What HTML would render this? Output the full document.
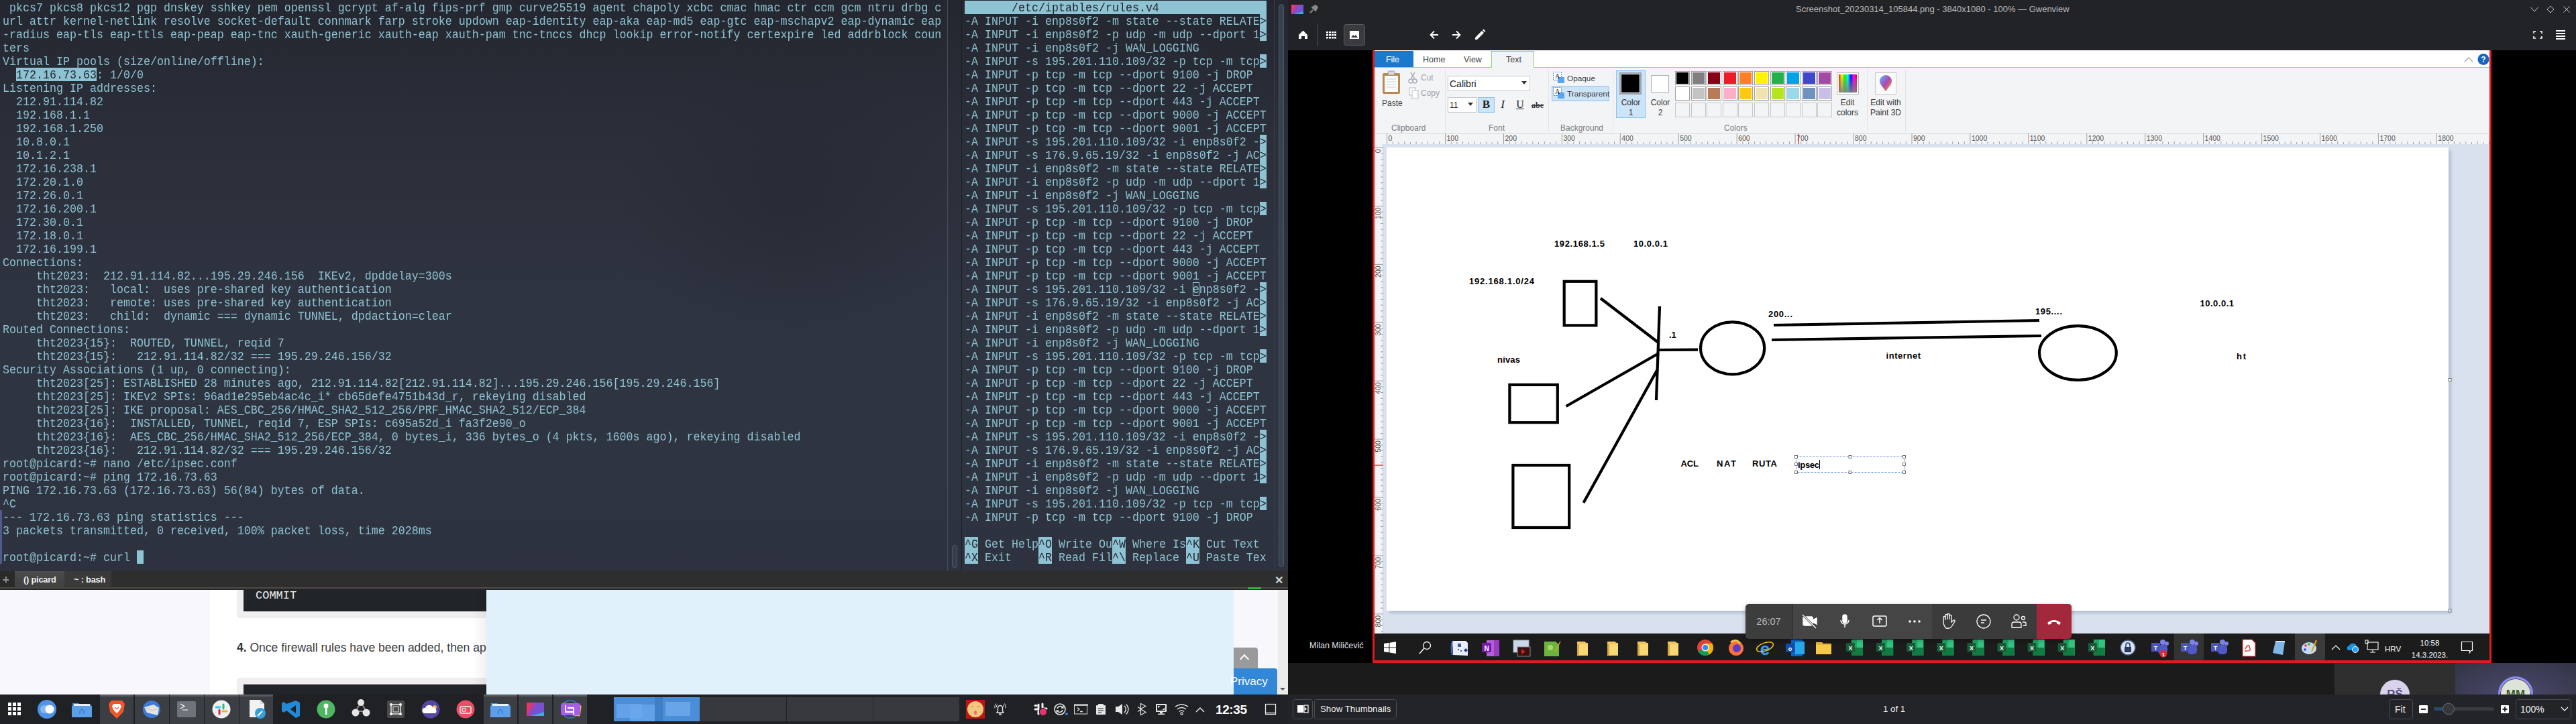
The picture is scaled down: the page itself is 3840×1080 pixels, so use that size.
<!DOCTYPE html>
<html><head><meta charset="utf-8"><title>screen</title>
<style>
*{margin:0;padding:0;box-sizing:border-box}
html,body{width:3840px;height:1080px;overflow:hidden;background:#000;position:relative}
body{font-family:"Liberation Sans",sans-serif}
.a{position:absolute}
#term{position:absolute;left:0;top:0;width:1920px;height:852px;overflow:hidden;background:radial-gradient(ellipse 260px 220px at 1180px 300px,rgba(30,33,42,.35),rgba(30,33,42,0)),linear-gradient(#24272f 0%,#2b2f3a 25%,#2f3441 55%,#2f3441 80%,#2d323e 100%)}
.tx{position:absolute;width:1px;height:1px;font-family:"Liberation Mono",monospace;font-size:16.67px;line-height:18.5185px;color:#8ec3d3;will-change:transform}
.tr{position:absolute;left:0;white-space:pre;transform:scaleY(1.08);transform-origin:0 0}
.tx i{font-style:normal;color:#1f232a}
.tx b.cur{font-weight:normal;outline:1px solid #8fbdcc;outline-offset:-1px}
.tabt{font-size:12.8px;line-height:18px;color:#f0f0f0;font-weight:bold;white-space:nowrap;letter-spacing:-0.2px}
.pt{font-size:12.5px;line-height:16px;white-space:nowrap}
.pr{font-size:12px;line-height:16px;white-space:nowrap}

</style></head><body>
<div id="term">
<div class="a" style="left:24px;top:101px;width:120px;height:20px;background:#8ec3d3"></div>
<div class="a" style="left:204px;top:821px;width:10px;height:20px;background:#8ec3d3"></div>
<div class="a" style="left:1438px;top:1px;width:450px;height:20px;background:#8ec3d3"></div>
<div class="a" style="left:1878px;top:21px;width:10px;height:20px;background:#8ec3d3"></div>
<div class="a" style="left:1878px;top:41px;width:10px;height:20px;background:#8ec3d3"></div>
<div class="a" style="left:1878px;top:81px;width:10px;height:20px;background:#8ec3d3"></div>
<div class="a" style="left:1878px;top:201px;width:10px;height:20px;background:#8ec3d3"></div>
<div class="a" style="left:1878px;top:221px;width:10px;height:20px;background:#8ec3d3"></div>
<div class="a" style="left:1878px;top:241px;width:10px;height:20px;background:#8ec3d3"></div>
<div class="a" style="left:1878px;top:261px;width:10px;height:20px;background:#8ec3d3"></div>
<div class="a" style="left:1878px;top:301px;width:10px;height:20px;background:#8ec3d3"></div>
<div class="a" style="left:1878px;top:421px;width:10px;height:20px;background:#8ec3d3"></div>
<div class="a" style="left:1878px;top:441px;width:10px;height:20px;background:#8ec3d3"></div>
<div class="a" style="left:1878px;top:461px;width:10px;height:20px;background:#8ec3d3"></div>
<div class="a" style="left:1878px;top:481px;width:10px;height:20px;background:#8ec3d3"></div>
<div class="a" style="left:1878px;top:521px;width:10px;height:20px;background:#8ec3d3"></div>
<div class="a" style="left:1878px;top:641px;width:10px;height:20px;background:#8ec3d3"></div>
<div class="a" style="left:1878px;top:661px;width:10px;height:20px;background:#8ec3d3"></div>
<div class="a" style="left:1878px;top:681px;width:10px;height:20px;background:#8ec3d3"></div>
<div class="a" style="left:1878px;top:701px;width:10px;height:20px;background:#8ec3d3"></div>
<div class="a" style="left:1878px;top:741px;width:10px;height:20px;background:#8ec3d3"></div>
<div class="a" style="left:1438px;top:801px;width:20px;height:20px;background:#8ec3d3"></div>
<div class="a" style="left:1438px;top:821px;width:20px;height:20px;background:#8ec3d3"></div>
<div class="a" style="left:1548px;top:801px;width:20px;height:20px;background:#8ec3d3"></div>
<div class="a" style="left:1548px;top:821px;width:20px;height:20px;background:#8ec3d3"></div>
<div class="a" style="left:1658px;top:801px;width:20px;height:20px;background:#8ec3d3"></div>
<div class="a" style="left:1658px;top:821px;width:20px;height:20px;background:#8ec3d3"></div>
<div class="a" style="left:1768px;top:801px;width:20px;height:20px;background:#8ec3d3"></div>
<div class="a" style="left:1768px;top:821px;width:20px;height:20px;background:#8ec3d3"></div>
<div class="a" style="left:1778px;top:421px;width:10px;height:20px;border:1px solid #8ec3d3"></div>
<div class="tx" style="left:4px;top:0"><div class="tr" style="top:3px"> pkcs7 pkcs8 pkcs12 pgp dnskey sshkey pem openssl gcrypt af-alg fips-prf gmp curve25519 agent chapoly xcbc cmac hmac ctr ccm gcm ntru drbg c</div><div class="tr" style="top:23px">url attr kernel-netlink resolve socket-default connmark farp stroke updown eap-identity eap-aka eap-md5 eap-gtc eap-mschapv2 eap-dynamic eap</div><div class="tr" style="top:43px">-radius eap-tls eap-ttls eap-peap eap-tnc xauth-generic xauth-eap xauth-pam tnc-tnccs dhcp lookip error-notify certexpire led addrblock coun</div><div class="tr" style="top:63px">ters</div><div class="tr" style="top:83px">Virtual IP pools (size/online/offline):</div><div class="tr" style="top:103px">  <i>172.16.73.63</i>: 1/0/0</div><div class="tr" style="top:123px">Listening IP addresses:</div><div class="tr" style="top:143px">  212.91.114.82</div><div class="tr" style="top:163px">  192.168.1.1</div><div class="tr" style="top:183px">  192.168.1.250</div><div class="tr" style="top:203px">  10.8.0.1</div><div class="tr" style="top:223px">  10.1.2.1</div><div class="tr" style="top:243px">  172.16.238.1</div><div class="tr" style="top:263px">  172.20.1.0</div><div class="tr" style="top:283px">  172.26.0.1</div><div class="tr" style="top:303px">  172.16.200.1</div><div class="tr" style="top:323px">  172.30.0.1</div><div class="tr" style="top:343px">  172.18.0.1</div><div class="tr" style="top:363px">  172.16.199.1</div><div class="tr" style="top:383px">Connections:</div><div class="tr" style="top:403px">     tht2023:  212.91.114.82...195.29.246.156  IKEv2, dpddelay=300s</div><div class="tr" style="top:423px">     tht2023:   local:  uses pre-shared key authentication</div><div class="tr" style="top:443px">     tht2023:   remote: uses pre-shared key authentication</div><div class="tr" style="top:463px">     tht2023:   child:  dynamic === dynamic TUNNEL, dpdaction=clear</div><div class="tr" style="top:483px">Routed Connections:</div><div class="tr" style="top:503px">     tht2023{15}:  ROUTED, TUNNEL, reqid 7</div><div class="tr" style="top:523px">     tht2023{15}:   212.91.114.82/32 === 195.29.246.156/32</div><div class="tr" style="top:543px">Security Associations (1 up, 0 connecting):</div><div class="tr" style="top:563px">     tht2023[25]: ESTABLISHED 28 minutes ago, 212.91.114.82[212.91.114.82]...195.29.246.156[195.29.246.156]</div><div class="tr" style="top:583px">     tht2023[25]: IKEv2 SPIs: 96ad1e295eb4ac4c_i* cb65defe4751b43d_r, rekeying disabled</div><div class="tr" style="top:603px">     tht2023[25]: IKE proposal: AES_CBC_256/HMAC_SHA2_512_256/PRF_HMAC_SHA2_512/ECP_384</div><div class="tr" style="top:623px">     tht2023{16}:  INSTALLED, TUNNEL, reqid 7, ESP SPIs: c695a52d_i fa3f2e90_o</div><div class="tr" style="top:643px">     tht2023{16}:  AES_CBC_256/HMAC_SHA2_512_256/ECP_384, 0 bytes_i, 336 bytes_o (4 pkts, 1600s ago), rekeying disabled</div><div class="tr" style="top:663px">     tht2023{16}:   212.91.114.82/32 === 195.29.246.156/32</div><div class="tr" style="top:683px">root@picard:~# nano /etc/ipsec.conf</div><div class="tr" style="top:703px">root@picard:~# ping 172.16.73.63</div><div class="tr" style="top:723px">PING 172.16.73.63 (172.16.73.63) 56(84) bytes of data.</div><div class="tr" style="top:743px">^C</div><div class="tr" style="top:763px">--- 172.16.73.63 ping statistics ---</div><div class="tr" style="top:783px">3 packets transmitted, 0 received, 100% packet loss, time 2028ms</div><div class="tr" style="top:803px"></div><div class="tr" style="top:823px">root@picard:~# curl  </div></div>
<div class="tx" style="left:1438px;top:0"><div class="tr" style="top:3px"><i>       /etc/iptables/rules.v4                </i></div><div class="tr" style="top:23px">-A INPUT -i enp8s0f2 -m state --state RELATE<i>&gt;</i></div><div class="tr" style="top:43px">-A INPUT -i enp8s0f2 -p udp -m udp --dport 1<i>&gt;</i></div><div class="tr" style="top:63px">-A INPUT -i enp8s0f2 -j WAN_LOGGING</div><div class="tr" style="top:83px">-A INPUT -s 195.201.110.109/32 -p tcp -m tcp<i>&gt;</i></div><div class="tr" style="top:103px">-A INPUT -p tcp -m tcp --dport 9100 -j DROP</div><div class="tr" style="top:123px">-A INPUT -p tcp -m tcp --dport 22 -j ACCEPT</div><div class="tr" style="top:143px">-A INPUT -p tcp -m tcp --dport 443 -j ACCEPT</div><div class="tr" style="top:163px">-A INPUT -p tcp -m tcp --dport 9000 -j ACCEPT</div><div class="tr" style="top:183px">-A INPUT -p tcp -m tcp --dport 9001 -j ACCEPT</div><div class="tr" style="top:203px">-A INPUT -s 195.201.110.109/32 -i enp8s0f2 -<i>&gt;</i></div><div class="tr" style="top:223px">-A INPUT -s 176.9.65.19/32 -i enp8s0f2 -j AC<i>&gt;</i></div><div class="tr" style="top:243px">-A INPUT -i enp8s0f2 -m state --state RELATE<i>&gt;</i></div><div class="tr" style="top:263px">-A INPUT -i enp8s0f2 -p udp -m udp --dport 1<i>&gt;</i></div><div class="tr" style="top:283px">-A INPUT -i enp8s0f2 -j WAN_LOGGING</div><div class="tr" style="top:303px">-A INPUT -s 195.201.110.109/32 -p tcp -m tcp<i>&gt;</i></div><div class="tr" style="top:323px">-A INPUT -p tcp -m tcp --dport 9100 -j DROP</div><div class="tr" style="top:343px">-A INPUT -p tcp -m tcp --dport 22 -j ACCEPT</div><div class="tr" style="top:363px">-A INPUT -p tcp -m tcp --dport 443 -j ACCEPT</div><div class="tr" style="top:383px">-A INPUT -p tcp -m tcp --dport 9000 -j ACCEPT</div><div class="tr" style="top:403px">-A INPUT -p tcp -m tcp --dport 9001 -j ACCEPT</div><div class="tr" style="top:423px">-A INPUT -s 195.201.110.109/32 -i enp8s0f2 -<i>&gt;</i></div><div class="tr" style="top:443px">-A INPUT -s 176.9.65.19/32 -i enp8s0f2 -j AC<i>&gt;</i></div><div class="tr" style="top:463px">-A INPUT -i enp8s0f2 -m state --state RELATE<i>&gt;</i></div><div class="tr" style="top:483px">-A INPUT -i enp8s0f2 -p udp -m udp --dport 1<i>&gt;</i></div><div class="tr" style="top:503px">-A INPUT -i enp8s0f2 -j WAN_LOGGING</div><div class="tr" style="top:523px">-A INPUT -s 195.201.110.109/32 -p tcp -m tcp<i>&gt;</i></div><div class="tr" style="top:543px">-A INPUT -p tcp -m tcp --dport 9100 -j DROP</div><div class="tr" style="top:563px">-A INPUT -p tcp -m tcp --dport 22 -j ACCEPT</div><div class="tr" style="top:583px">-A INPUT -p tcp -m tcp --dport 443 -j ACCEPT</div><div class="tr" style="top:603px">-A INPUT -p tcp -m tcp --dport 9000 -j ACCEPT</div><div class="tr" style="top:623px">-A INPUT -p tcp -m tcp --dport 9001 -j ACCEPT</div><div class="tr" style="top:643px">-A INPUT -s 195.201.110.109/32 -i enp8s0f2 -<i>&gt;</i></div><div class="tr" style="top:663px">-A INPUT -s 176.9.65.19/32 -i enp8s0f2 -j AC<i>&gt;</i></div><div class="tr" style="top:683px">-A INPUT -i enp8s0f2 -m state --state RELATE<i>&gt;</i></div><div class="tr" style="top:703px">-A INPUT -i enp8s0f2 -p udp -m udp --dport 1<i>&gt;</i></div><div class="tr" style="top:723px">-A INPUT -i enp8s0f2 -j WAN_LOGGING</div><div class="tr" style="top:743px">-A INPUT -s 195.201.110.109/32 -p tcp -m tcp<i>&gt;</i></div><div class="tr" style="top:763px">-A INPUT -p tcp -m tcp --dport 9100 -j DROP</div><div class="tr" style="top:783px"></div><div class="tr" style="top:803px"><i>^G</i> Get Help<i>^O</i> Write Ou<i>^W</i> Where Is<i>^K</i> Cut Text</div><div class="tr" style="top:823px"><i>^X</i> Exit    <i>^R</i> Read Fil<i>^\</i> Replace <i>^U</i> Paste Tex</div></div>
<div class="a" style="left:1412px;top:0;width:1px;height:852px;background:#474c56"></div>
<div class="a" style="left:1433px;top:0;width:1px;height:852px;background:#1b1e24"></div>
<div class="a" style="left:1419px;top:813px;width:8px;height:34px;border:1px solid #4d5866;background:#343d49;border-radius:4px"></div>
<div class="a" style="left:1899px;top:0;width:1px;height:852px;background:#3b3f4a"></div>
<div class="a" style="left:1906px;top:6px;width:8px;height:840px;border:1px solid #4d5866;background:#37424f;border-radius:4px"></div>
<div class="a" style="left:0;top:761px;width:3px;height:80px;background:#505b8c"></div>

</div>
<!-- tab bar -->
<div class="a" style="left:0;top:852px;width:1920px;height:24px;background:#2e2e2e"></div>
<div class="a" style="left:0;top:852px;width:22px;height:24px;background:#2a2a2a"></div>
<div class="a" style="left:4px;top:860px;width:10px;height:10px;">
 <div class="a" style="left:4px;top:0px;width:2px;height:9px;background:#8c8c8c"></div>
 <div class="a" style="left:0px;top:3.5px;width:9px;height:2px;background:#8c8c8c"></div>
</div>
<div class="a" style="left:22px;top:852px;width:74px;height:24px;background:linear-gradient(#4c4c4c,#404040)"></div>
<div class="a" style="left:96px;top:852px;width:70px;height:23px;background:#3a3a3a"></div>
<div class="a tabt" style="left:35px;top:856px;">() picard</div>
<div class="a tabt" style="left:110px;top:856px">~ : bash</div>
<div class="a" style="left:1899px;top:859px;width:14px;height:14px;color:#cfcfcf;font-size:16px;line-height:14px;text-align:center;font-weight:bold">&#x2715;</div>
<div class="a" style="left:0;top:876px;width:1920px;height:4px;background:#4a4a4a;border-bottom:2px solid #262626"></div>
<div class="a" style="left:1860px;top:876px;width:20px;height:3px;background:#27b43e"></div>
<!-- browser -->
<div class="a" style="left:0;top:880px;width:1920px;height:156px;background:#fff;overflow:hidden">
 <div class="a" style="left:0;top:0;width:313px;height:156px;background:#f8f8fc"></div>
 <div class="a" style="left:353px;top:-20px;width:500px;height:62px;background:#f0eeee;border-radius:5px"></div>
 <div class="a" style="left:363px;top:-20px;width:490px;height:52px;background:#212428"></div>
 <div class="a" style="left:381px;top:0px;font-family:'Liberation Mono',monospace;font-size:17px;line-height:18px;color:#f2f2f2">COMMIT</div>
 <div class="a" style="left:353px;top:75px;font-size:17.5px;line-height:22px;color:#3c3c3c;white-space:nowrap"><b style="color:#333">4.</b> Once firewall rules have been added, then ap</div>
 <div class="a" style="left:353px;top:131px;width:500px;height:62px;background:#f0eeee;border-radius:5px"></div>
 <div class="a" style="left:363px;top:141px;width:490px;height:52px;background:#212428"></div>
 <div class="a" style="left:705px;top:0;width:20px;height:156px;background:linear-gradient(90deg,rgba(0,0,0,0),rgba(0,0,0,.06))"></div>
 <div class="a" style="left:725px;top:0;width:1114px;height:156px;background:#e1f1fb"></div>
 <div class="a" style="left:1839px;top:0;width:66px;height:156px;background:#f8f8fc"></div>
 <div class="a" style="left:1905px;top:0;width:15px;height:156px;background:#ececec"></div>
 <div class="a" style="left:1908px;top:146px;width:0;height:0;border-left:4px solid transparent;border-right:4px solid transparent;border-top:4px solid #555"></div>
 <div class="a" style="left:1839px;top:86px;width:36px;height:32px;background:#9a9a9a;border-radius:0 4px 0 0"></div>
 <div class="a" style="left:1850px;top:98px;width:10px;height:10px;border-left:2px solid #fff;border-top:2px solid #fff;transform:rotate(45deg)"></div>
 <div class="a" style="left:1839px;top:117px;width:65px;height:39px;background:#3288d6;border-radius:0 4px 0 0"></div>
 <div class="a" style="left:1834px;top:125px;font-size:17px;line-height:24px;color:#fff;white-space:nowrap">Privacy</div>
</div>
<!-- taskbar -->
<svg class="a" style="left:0;top:1036px" width="1920" height="44" viewBox="0 1036 1920 44">
<rect x="0" y="1036" width="1920" height="44" fill="#1f2125"/>
<!-- app grid -->
<g fill="#fff">
<rect x="12" y="1048" width="5" height="5"/><rect x="19" y="1048" width="5" height="5"/><rect x="26" y="1048" width="5" height="5"/>
<rect x="12" y="1055" width="5" height="5"/><rect x="19" y="1055" width="5" height="5"/><rect x="26" y="1055" width="5" height="5"/>
<rect x="12" y="1062" width="5" height="5"/><rect x="19" y="1062" width="5" height="5"/><rect x="26" y="1062" width="5" height="5"/>
</g>
<!-- toggle -->
<circle cx="70" cy="1058" r="14" fill="#4f95e6"/>
<rect x="60" y="1052" width="21" height="12" rx="6" fill="#8ab8f0"/>
<circle cx="74" cy="1058" r="6.5" fill="#fff"/>
<!-- folder -->
<g transform="translate(107,1046)"><path d="M1 3 h9 l3 2 h16 v19 h-28z" fill="#4a8fe0"/><rect x="3" y="4" width="24" height="3" fill="#e8f0fb"/><path d="M0 7 h30 v17 h-30z" fill="#5b9fe8"/><path d="M12 19 v-4 l3 -3 l3 3 v4" fill="none" stroke="#3a78c4" stroke-width="1.3"/></g>
<!-- slots -->
<g fill="#3b3e42"><rect x="149" y="1036" width="50" height="44"/><rect x="201" y="1036" width="51" height="44"/><rect x="253" y="1036" width="51" height="44"/><rect x="305" y="1036" width="51" height="44"/><rect x="357" y="1036" width="50" height="44"/>
<rect x="721" y="1036" width="50" height="44"/><rect x="773" y="1036" width="50" height="44"/><rect x="825" y="1036" width="50" height="44"/></g>
<g fill="#585c61"><rect x="149" y="1036" width="50" height="3"/><rect x="201" y="1036" width="51" height="3"/><rect x="253" y="1036" width="51" height="3"/><rect x="305" y="1036" width="51" height="3"/><rect x="357" y="1036" width="50" height="3"/>
<rect x="721" y="1036" width="50" height="3"/><rect x="773" y="1036" width="50" height="3"/><rect x="825" y="1036" width="50" height="3"/></g>
<!-- brave -->
<path d="M166 1045 h16 l4 5 l-2 12 l-10 10 l-10 -10 l-2 -12z" fill="#f1562b"/>
<path d="M169 1050 h10 l2 4 l-3 6 l-4 4 l-4 -4 l-3 -6z" fill="#fff"/>
<path d="M171 1055 l3 3 l3 -3" fill="none" stroke="#f1562b" stroke-width="1.2"/>
<!-- thunderbird -->
<circle cx="226" cy="1058" r="13" fill="#3d7ad8"/>
<path d="M215 1055 l14 -4 l8 5 l-2 11 l-16 -4z" fill="#e4e4e4"/>
<path d="M217 1056 l10 4 l9 -3" fill="none" stroke="#bdbdbd" stroke-width="1"/>
<!-- terminal -->
<rect x="264" y="1046" width="28" height="24" rx="2" fill="#6f737a"/>
<path d="M269 1050 l6 3.5 l-6 3.5 M272 1059 h8" fill="none" stroke="#fff" stroke-width="1.2"/>
<!-- slack -->
<circle cx="330" cy="1058" r="13.5" fill="#f0f0f0"/>
<g stroke-linecap="round" stroke-width="3">
<path d="M322 1055 h6" stroke="#36c5f0"/><path d="M333 1051 v6" stroke="#2eb67d"/><path d="M332 1061 h6" stroke="#ecb22e"/><path d="M327 1059 v6" stroke="#e01e5a"/>
</g>
<!-- doc -->
<path d="M372 1044 h16 l6 6 v20 h-22z" fill="#f2f2f2"/><path d="M388 1044 v6 h6" fill="#d9d9d9"/>
<circle cx="388" cy="1064" r="8" fill="#35a0dc"/><path d="M384 1068 l7 -7" stroke="#fff" stroke-width="2"/>
<!-- vscode -->
<path d="M441 1045 l6 3 v20 l-6 3 l-14 -11 l-4 3 l-3 -2 v-12 l3 -2 l4 3z M441 1052 l-8 6 l8 6z" fill="#2489d8" fill-rule="evenodd"/>
<!-- key -->
<circle cx="486" cy="1058" r="13.5" fill="#4fb662"/>
<circle cx="486" cy="1053" r="3.5" fill="#fff"/><rect x="485" y="1055" width="2.5" height="11" fill="#fff"/>
<!-- network -->
<path d="M538 1048 l-8 13 h16z" fill="none" stroke="#8a8a8a" stroke-width="2"/>
<circle cx="538" cy="1048" r="5" fill="#e6e6e6"/><circle cx="530" cy="1063" r="5.5" fill="#e6e6e6"/><circle cx="546" cy="1063" r="5.5" fill="#e6e6e6"/>
<!-- frame -->
<rect x="577" y="1045" width="26" height="26" rx="3" fill="#4a4a4a"/>
<rect x="583" y="1051" width="14" height="14" fill="none" stroke="#e6e6e6" stroke-width="1.5"/>
<rect x="586" y="1054" width="8" height="8" fill="none" stroke="#e6e6e6" stroke-width="1"/>
<g fill="#fff"><circle cx="583" cy="1051" r="2"/><circle cx="597" cy="1051" r="2"/><circle cx="583" cy="1065" r="2"/><circle cx="597" cy="1065" r="2"/></g>
<!-- cloud -->
<circle cx="642" cy="1058" r="13.5" fill="#5547a8"/>
<circle cx="648" cy="1055" r="3" fill="#f5b942"/>
<path d="M633 1064 a4 4 0 0 1 1 -8 a6 6 0 0 1 11 -1 a4 4 0 0 1 5 4 a4 4 0 0 1 -1 5z" fill="#fff"/>
<!-- radio -->
<circle cx="694" cy="1058" r="13.5" fill="#ec4d63"/>
<rect x="686" y="1054" width="16" height="10" rx="1.5" fill="none" stroke="#fff" stroke-width="1.3"/>
<rect x="689" y="1057" width="5" height="4" fill="none" stroke="#fff" stroke-width="1"/>
<!-- folder 2 -->
<g transform="translate(731,1046)"><path d="M1 3 h9 l3 2 h16 v19 h-28z" fill="#4a8fe0"/><rect x="3" y="4" width="24" height="3" fill="#e8f0fb"/><path d="M0 7 h30 v17 h-30z" fill="#5b9fe8"/><path d="M12 19 v-4 l3 -3 l3 3 v4" fill="none" stroke="#3a78c4" stroke-width="1.3"/></g>
<!-- krita -->
<path d="M785 1048 h26 v20 h-26z" fill="#7a4fd0"/><path d="M785 1048 h8 l-5 20 h-3z" fill="#e8365d"/><path d="M793 1048 h8 l-14 20 h-2z" fill="#b33ea0" opacity=".9"/><path d="M811 1062 v6 h-20z" fill="#2fb3d6"/>
<!-- screenshot -->
<circle cx="850" cy="1058" r="13" fill="none" stroke="#2b7de0" stroke-width="1.5"/>
<rect x="838" y="1050" width="28" height="17" rx="2" fill="#f5b040" transform="rotate(8 852 1058)"/>
<rect x="836" y="1049" width="29" height="18" rx="3" fill="#a55ee8"/>
<path d="M843 1052 v10 h12 M846 1056 h9 v10" fill="none" stroke="#fff" stroke-width="1.8"/>
<!-- pager -->
<rect x="915" y="1040" width="128" height="36" fill="#4b8ed8"/>
<rect x="919" y="1050" width="38" height="21" fill="#6aa6ea" opacity=".8"/><rect x="939" y="1051" width="37" height="25" fill="#6aaaf0" opacity=".7"/>
<rect x="976" y="1040" width="12" height="36" fill="#3f7fc8"/>
<rect x="992" y="1047" width="37" height="21" fill="#68a4e8"/>
<rect x="1043" y="1040" width="129" height="36" fill="#38393c"/><rect x="1173" y="1040" width="128" height="36" fill="#38393c"/><rect x="1302" y="1040" width="128" height="36" fill="#38393c"/>
<!-- tray -->
<rect x="1420" y="1040" width="10" height="36" fill="#38393c"/>
<rect x="1440" y="1044" width="28" height="28" fill="#c01313"/>
<circle cx="1454" cy="1058" r="12" fill="#f5c77e"/>
<path d="M1448 1054 h3 M1457 1054 h3" stroke="#b07a40" stroke-width="1"/><ellipse cx="1454" cy="1063" rx="2" ry="3" fill="#e76b7d"/>
<g fill="none" stroke="#e6e6e6" stroke-width="1.4">
<path d="M1486 1063 h10 l-1.5 -2.5 v-4.5 a3.5 3.5 0 0 0 -7 0 v4.5z" /><path d="M1489.5 1064.5 a1.5 1.5 0 0 0 3 0" fill="#e6e6e6"/>
<path d="M1484.5 1049.5 a9 9 0 0 0 -1.5 7 M1486.5 1051 a6 6 0 0 0 -1 4 M1497.5 1049.5 a9 9 0 0 1 1.5 7 M1495.5 1051 a6 6 0 0 1 1 4" stroke-width="1"/>
<circle cx="1580" cy="1058" r="8" stroke-width="1.6"/><path d="M1576 1057 a4.5 4.5 0 0 1 8 -1.5 M1584 1059 a4.5 4.5 0 0 1 -8 1.5" stroke-width="1.5"/><path d="M1585 1053 v3 h-3 M1575 1063 v-3 h3" stroke-width="1.3"/>
<rect x="1601.5" y="1052" width="19" height="13" stroke-width="1"/><path d="M1601 1051.5 h21" stroke-width="2"/><path d="M1606 1055.5 l3 2.5 l-3 2.5 M1610 1061.5 h4" stroke-width="1.3"/>
<path d="M1708 1053.5 l-7.5 -4 v17 l7.5 -4 l-8 -5z M1700.5 1057.5 l-4.5 -3 M1700.5 1058.5 l-4.5 3" stroke-width="1.2"/>
<path d="M1752 1054.5 a15 15 0 0 1 19 0 M1755 1058 a10 10 0 0 1 13 0 M1758 1061.5 a5 5 0 0 1 7 0" stroke-width="1.5"/><circle cx="1761.5" cy="1064.5" r="1.6" stroke-width="1.2"/>
<path d="M1783 1062 l6 -6 l6 6" stroke-width="1.5"/>
<rect x="1886.5" y="1050.5" width="15" height="15" stroke-width="1.3"/><path d="M1886.5 1063.5 h15" stroke-width="1.3"/>
</g>
<g fill="#e6e6e6">
<rect x="1634" y="1052" width="14" height="14" rx="1"/><rect x="1637" y="1050" width="8" height="3" rx="1"/>
<path d="M1637 1057 h8 M1637 1060 h8 M1637 1063 h5" stroke="#1f2125" stroke-width="1.2"/>
<path d="M1663 1054 h4 l6 -4 v16 l-6 -4 h-4z"/>
<path d="M1676 1053 a6.5 6.5 0 0 1 0 10 M1678.5 1050.5 a10 10 0 0 1 0 15" fill="none" stroke="#e6e6e6" stroke-width="1.4"/>
<rect x="1723" y="1050" width="16" height="12" rx="1"/><rect x="1725" y="1052" width="12" height="8" fill="#1f2125"/><path d="M1726 1053 l3.5 0 l-3.5 3.5z M1736 1059 l-3.5 0 l3.5 -3.5z"/><rect x="1729" y="1062" width="4" height="2.5"/><rect x="1726" y="1064.5" width="10" height="1.5"/>
</g>
<g stroke="#f2f2f2" stroke-width="3" stroke-linecap="round">
<path d="M1548 1051 v5 M1554 1050 v5 M1543 1058 h5 M1556 1057 h4 M1543 1052.5 h2 M1548 1061 v4"/>
</g>
<circle cx="1555" cy="1062" r="5.5" fill="#e8336e" stroke="#1f2125" stroke-width="1"/>
<circle cx="1590" cy="1065" r="2" fill="#3b7ddd"/>
<text x="1812" y="1064.5" font-family="Liberation Sans" font-weight="bold" font-size="19" fill="#fff" textLength="47">12:35</text>
</svg>


<!-- gwenview title + toolbar -->
<div class="a" style="left:1920px;top:0;width:1920px;height:75px;background:#212327"></div>
<svg class="a" style="left:1920px;top:0" width="1920" height="75" viewBox="1920 0 1920 75">
<rect x="1925" y="7" width="18" height="14" fill="#7a52d6"/><path d="M1925 7 h6 l-4 14 h-2z" fill="#f0386b"/><path d="M1931 7 h6 l-10 14 h-2z" fill="#b03ea8"/><path d="M1943 17 v4 h-14z" fill="#2fb0da"/>
<path d="M1953 19 l4 -4 M1956 11 l5 -3 l3 3 l-3 5z" stroke="#8a8a8a" stroke-width="2" fill="#8a8a8a"/>
<path d="M1936 52 l6.5 -6.5 l6.5 6.5 v6 h-4 v-4 h-5 v4 h-4z" fill="#fff"/><rect x="1941" y="54" width="3" height="4" fill="#212327"/>
<rect x="1964" y="35" width="1" height="34" fill="#505256"/>
<g fill="#fff"><rect x="1977" y="47" width="3" height="2.5"/><rect x="1981" y="47" width="3" height="2.5"/><rect x="1985" y="47" width="3" height="2.5"/><rect x="1989" y="47" width="3" height="2.5"/>
<rect x="1977" y="51" width="3" height="2.5"/><rect x="1981" y="51" width="3" height="2.5"/><rect x="1985" y="51" width="3" height="2.5"/><rect x="1989" y="51" width="3" height="2.5"/>
<rect x="1977" y="55" width="3" height="2.5"/><rect x="1981" y="55" width="3" height="2.5"/><rect x="1985" y="55" width="3" height="2.5"/><rect x="1989" y="55" width="3" height="2.5"/></g>
<rect x="2003.5" y="36.5" width="31" height="31" rx="3" fill="#3a3b3e" stroke="#5b5c60"/>
<rect x="2012" y="46" width="14" height="12" fill="#fff"/><path d="M2014 56 l3 -4 l2 2 l2 -2 l3 4z" fill="#3a3b3e"/>
<path d="M2144 52 h-11 M2138 46.5 l-5.5 5.5 l5.5 5.5" stroke="#fff" stroke-width="1.8" fill="none"/>
<path d="M2165 52 h11 M2171 46.5 l5.5 5.5 l-5.5 5.5" stroke="#fff" stroke-width="1.8" fill="none"/>
<path d="M2199 59 v-3 l10 -10 l3 3 l-10 10z M2210 45 l1.5 -1.5 l3 3 l-1.5 1.5z" fill="#fff"/>
<path d="M3772.5 11 l5.5 6 l5.5 -6" stroke="#c8c8c8" stroke-width="1" fill="none"/>
<path d="M3802 9 l5 5 l-5 5 l-5 -5z" stroke="#c8c8c8" stroke-width="1" fill="none"/>
<path d="M3821.5 9.5 l9 9 M3830.5 9.5 l-9 9" stroke="#c8c8c8" stroke-width="1" fill="none"/>
<path d="M3777 50 v-3 h3 M3786 47 h3 v3 M3789 54 v3 h-3 M3780 57 h-3 v-3" stroke="#fff" stroke-width="1.6" fill="none"/>
<g fill="#fff"><rect x="3810" y="45" width="14" height="2"/><rect x="3810" y="49" width="14" height="2"/><rect x="3810" y="53" width="14" height="2"/><rect x="3810" y="57" width="14" height="2"/></g>
</svg>
<div class="a" style="left:2677px;top:5px;font-size:13px;line-height:18px;color:#bdbdbd;white-space:nowrap">Screenshot_20230314_105844.png - 3840x1080 - 100% — Gwenview</div>
<!-- image view -->
<div class="a" style="left:1920px;top:75px;width:1920px;height:961px;background:#1b1b1c;overflow:hidden">
 <div class="a" style="left:0;top:0;width:1920px;height:914px;background:#000"></div>
  <div class="a" style="left:32px;top:880px;font-size:12.5px;line-height:16px;color:#e6e6e6;white-space:nowrap">Milan Miličević</div>
 <div class="a" style="left:1560px;top:914px;width:180px;height:47px;background:#2f2f30"></div>
 <div class="a" style="left:1740px;top:914px;width:180px;height:47px;background:radial-gradient(ellipse 120px 60px at 90px 47px,#4a4a6e,#353548)"></div>
 <div class="a" style="left:1628px;top:939px;width:44px;height:44px;border-radius:50%;background:#d8d3ea;color:#5a5080;font-size:17px;text-align:center;line-height:44px;font-weight:bold">RŠ</div>
 <div class="a" style="left:1804px;top:934px;width:52px;height:52px;border-radius:50%;background:#dde3d6;border:3px solid #8c8cf5;box-shadow:inset 0 0 0 1px #3a3a50;color:#3e5a30;font-size:17px;text-align:center;line-height:48px;font-weight:bold">MM</div>
</div>
<div class="a" style="left:2046px;top:75px;width:1668px;height:914px;background:#e21b1b"></div>
<div class="a" style="left:2049px;top:75px;width:1662px;height:26px;background:#fff"></div>
<div class="a" style="left:2049px;top:76px;width:58px;height:25px;background:#1979ca"></div>
<div class="a pt" style="left:2047px;top:81px;width:58px;text-align:center;color:#fff">File</div>
<div class="a pt" style="left:2121px;top:81px;color:#444">Home</div>
<div class="a pt" style="left:2182px;top:81px;color:#444">View</div>
<div class="a" style="left:2223px;top:76px;width:64px;height:26px;background:#f3f4f6;border:1px solid #8fd46a;border-bottom:none"></div>
<div class="a pt" style="left:2245px;top:81px;color:#444">Text</div>
<div class="a" style="left:2049px;top:101px;width:1662px;height:98px;background:#f3f4f6"></div>
<div class="a" style="left:2049px;top:100px;width:174px;height:1px;background:#8fd46a"></div>
<div class="a" style="left:2287px;top:100px;width:1424px;height:1px;background:#8fd46a"></div>
<svg class="a" style="left:3670px;top:78px" width="41" height="22"><path d="M4 14 l6 -6 l6 6" stroke="#9aa0a8" stroke-width="1.2" fill="none"/><circle cx="32" cy="10.5" r="8.5" fill="#1565c0"/><text x="32" y="15" font-family="Liberation Sans" font-weight="bold" font-size="12" fill="#fff" text-anchor="middle">?</text></svg>
<div class="a" style="left:2154px;top:104px;width:1px;height:92px;background:#e2e3e5"></div>
<div class="a" style="left:2308px;top:104px;width:1px;height:92px;background:#e2e3e5"></div>
<div class="a" style="left:2404px;top:104px;width:1px;height:92px;background:#e2e3e5"></div>
<div class="a" style="left:2783px;top:104px;width:1px;height:92px;background:#e2e3e5"></div>
<div class="a" style="left:2840px;top:104px;width:1px;height:92px;background:#e2e3e5"></div>
<svg class="a" style="left:2058px;top:104px" width="95" height="60"><rect x="3" y="5" width="26" height="31" rx="2" fill="#b98a52"/><rect x="6" y="9" width="20" height="24" fill="#fdfdfd"/><path d="M9 14 h14 M9 18 h14 M9 22 h14 M9 26 h14" stroke="#c9ccd2" stroke-width="1"/><rect x="11" y="2" width="10" height="6" rx="1.5" fill="#d9d9d9" stroke="#888" stroke-width="0.8"/><circle cx="45" cy="17" r="3" fill="none" stroke="#a9b0bb" stroke-width="1.5"/><circle cx="51" cy="17" r="3" fill="none" stroke="#a9b0bb" stroke-width="1.5"/><path d="M45 14 l6 -10 M51 14 l-6 -10" stroke="#a9b0bb" stroke-width="1.5"/><rect x="43" y="27" width="9" height="11" fill="#fff" stroke="#b8bec8" stroke-width="1"/><rect x="47" y="31" width="9" height="12" fill="#fff" stroke="#b8bec8" stroke-width="1"/></svg>
<div class="a pr" style="left:2060px;top:146px;color:#444">Paste</div>
<div class="a pr" style="left:2118px;top:108px;color:#a0a4aa">Cut</div>
<div class="a pr" style="left:2118px;top:131px;color:#a0a4aa">Copy</div>
<div class="a pr" style="left:2074px;top:183px;color:#7a7d82">Clipboard</div>
<div class="a" style="left:2158px;top:113px;width:123px;height:23px;background:#fff;border:1px solid #c5c8ce"></div>
<div class="a pr" style="left:2161px;top:117px;color:#222;font-size:14px">Calibri</div>
<svg class="a" style="left:2268px;top:121px" width="10" height="6"><path d="M0 0 h8 l-4 5z" fill="#333"/></svg>
<div class="a" style="left:2158px;top:145px;width:43px;height:23px;background:#fff;border:1px solid #c5c8ce"></div>
<div class="a pr" style="left:2161px;top:149px;color:#222">11</div>
<svg class="a" style="left:2188px;top:153px" width="10" height="6"><path d="M0 0 h8 l-4 5z" fill="#333"/></svg>
<div class="a" style="left:2203px;top:145px;width:25px;height:23px;background:#cce4f7;border:1px solid #8fc0ee"></div>
<div class="a" style="left:2203px;top:146px;width:25px;text-align:center;font-family:'Liberation Serif',serif;font-weight:bold;font-size:17px;line-height:20px;color:#222">B</div>
<div class="a" style="left:2232px;top:146px;width:16px;text-align:center;font-family:'Liberation Serif',serif;font-style:italic;font-size:17px;line-height:20px;color:#222">I</div>
<div class="a" style="left:2258px;top:146px;width:16px;text-align:center;font-family:'Liberation Serif',serif;text-decoration:underline;font-size:16px;line-height:20px;color:#222">U</div>
<div class="a" style="left:2282px;top:148px;width:20px;text-align:center;font-family:'Liberation Serif',serif;font-weight:bold;text-decoration:line-through;font-size:12px;line-height:18px;color:#333">abc</div>
<div class="a pr" style="left:2219px;top:183px;color:#7a7d82">Font</div>
<div class="a" style="left:2313px;top:128px;width:86px;height:23px;background:#cce4f7;border:1px solid #8fc0ee"></div>
<svg class="a" style="left:2315px;top:107px" width="18" height="18"><rect x="0.5" y="0.5" width="12" height="12" fill="#fff" stroke="#3a78c4" stroke-dasharray="1.5 1.5"/><rect x="7" y="8" width="10" height="9" fill="#5aa5ee"/><text x="6.5" y="10" font-family="Liberation Serif" font-size="10" text-anchor="middle" fill="#223">A</text></svg>
<svg class="a" style="left:2315px;top:130px" width="18" height="18"><rect x="0.5" y="0.5" width="12" height="12" fill="#fff" stroke="#3a78c4" stroke-dasharray="1.5 1.5"/><rect x="7" y="8" width="10" height="9" fill="#5aa5ee"/><text x="6.5" y="10" font-family="Liberation Serif" font-size="10" text-anchor="middle" fill="#223">A</text></svg>
<div class="a pr" style="left:2336px;top:109px;color:#3a3a3a;font-size:11.8px">Opaque</div>
<div class="a pr" style="left:2336px;top:132px;color:#3a3a3a;font-size:11.8px">Transparent</div>
<div class="a pr" style="left:2326px;top:183px;color:#7a7d82">Background</div>
<div class="a" style="left:2409px;top:105px;width:44px;height:71px;background:#cce4f7;border:1px solid #8fc0ee"></div>
<div class="a" style="left:2414px;top:108px;width:33px;height:33px;background:#000;border:2px solid #9aa2ac;box-shadow:inset 0 0 0 1px #fff"></div>
<div class="a pr" style="left:2409px;top:146px;width:44px;text-align:center;color:#333;line-height:15px">Color<br>1</div>
<div class="a" style="left:2461px;top:112px;width:27px;height:26px;background:#fff;border:1px solid #a9b0b8"></div>
<div class="a pr" style="left:2453px;top:146px;width:44px;text-align:center;color:#333;line-height:15px">Color<br>2</div>
<div class="a" style="left:2497px;top:106px;width:22px;height:21px;background:#000000;border:1px solid #a0a0a0;box-shadow:inset 0 0 0 1px #fff"></div>
<div class="a" style="left:2497px;top:129px;width:22px;height:21px;background:#ffffff;border:1px solid #a0a0a0;box-shadow:inset 0 0 0 1px #fff"></div>
<div class="a" style="left:2497px;top:153px;width:22px;height:22px;background:#f3f4f6;border:1px solid #c8c8c8"></div>
<div class="a" style="left:2521px;top:106px;width:22px;height:21px;background:#7f7f7f;border:1px solid #a0a0a0;box-shadow:inset 0 0 0 1px #fff"></div>
<div class="a" style="left:2521px;top:129px;width:22px;height:21px;background:#c3c3c3;border:1px solid #a0a0a0;box-shadow:inset 0 0 0 1px #fff"></div>
<div class="a" style="left:2521px;top:153px;width:22px;height:22px;background:#f3f4f6;border:1px solid #c8c8c8"></div>
<div class="a" style="left:2544px;top:106px;width:22px;height:21px;background:#880015;border:1px solid #a0a0a0;box-shadow:inset 0 0 0 1px #fff"></div>
<div class="a" style="left:2544px;top:129px;width:22px;height:21px;background:#b97a57;border:1px solid #a0a0a0;box-shadow:inset 0 0 0 1px #fff"></div>
<div class="a" style="left:2544px;top:153px;width:22px;height:22px;background:#f3f4f6;border:1px solid #c8c8c8"></div>
<div class="a" style="left:2568px;top:106px;width:22px;height:21px;background:#ed1c24;border:1px solid #a0a0a0;box-shadow:inset 0 0 0 1px #fff"></div>
<div class="a" style="left:2568px;top:129px;width:22px;height:21px;background:#ffaec9;border:1px solid #a0a0a0;box-shadow:inset 0 0 0 1px #fff"></div>
<div class="a" style="left:2568px;top:153px;width:22px;height:22px;background:#f3f4f6;border:1px solid #c8c8c8"></div>
<div class="a" style="left:2591px;top:106px;width:22px;height:21px;background:#ff7f27;border:1px solid #a0a0a0;box-shadow:inset 0 0 0 1px #fff"></div>
<div class="a" style="left:2591px;top:129px;width:22px;height:21px;background:#ffc90e;border:1px solid #a0a0a0;box-shadow:inset 0 0 0 1px #fff"></div>
<div class="a" style="left:2591px;top:153px;width:22px;height:22px;background:#f3f4f6;border:1px solid #c8c8c8"></div>
<div class="a" style="left:2615px;top:106px;width:22px;height:21px;background:#fff200;border:1px solid #a0a0a0;box-shadow:inset 0 0 0 1px #fff"></div>
<div class="a" style="left:2615px;top:129px;width:22px;height:21px;background:#efe4b0;border:1px solid #a0a0a0;box-shadow:inset 0 0 0 1px #fff"></div>
<div class="a" style="left:2615px;top:153px;width:22px;height:22px;background:#f3f4f6;border:1px solid #c8c8c8"></div>
<div class="a" style="left:2639px;top:106px;width:22px;height:21px;background:#22b14c;border:1px solid #a0a0a0;box-shadow:inset 0 0 0 1px #fff"></div>
<div class="a" style="left:2639px;top:129px;width:22px;height:21px;background:#b5e61d;border:1px solid #a0a0a0;box-shadow:inset 0 0 0 1px #fff"></div>
<div class="a" style="left:2639px;top:153px;width:22px;height:22px;background:#f3f4f6;border:1px solid #c8c8c8"></div>
<div class="a" style="left:2662px;top:106px;width:22px;height:21px;background:#00a2e8;border:1px solid #a0a0a0;box-shadow:inset 0 0 0 1px #fff"></div>
<div class="a" style="left:2662px;top:129px;width:22px;height:21px;background:#99d9ea;border:1px solid #a0a0a0;box-shadow:inset 0 0 0 1px #fff"></div>
<div class="a" style="left:2662px;top:153px;width:22px;height:22px;background:#f3f4f6;border:1px solid #c8c8c8"></div>
<div class="a" style="left:2686px;top:106px;width:22px;height:21px;background:#3f48cc;border:1px solid #a0a0a0;box-shadow:inset 0 0 0 1px #fff"></div>
<div class="a" style="left:2686px;top:129px;width:22px;height:21px;background:#7092be;border:1px solid #a0a0a0;box-shadow:inset 0 0 0 1px #fff"></div>
<div class="a" style="left:2686px;top:153px;width:22px;height:22px;background:#f3f4f6;border:1px solid #c8c8c8"></div>
<div class="a" style="left:2709px;top:106px;width:22px;height:21px;background:#a349a4;border:1px solid #a0a0a0;box-shadow:inset 0 0 0 1px #fff"></div>
<div class="a" style="left:2709px;top:129px;width:22px;height:21px;background:#c8bfe7;border:1px solid #a0a0a0;box-shadow:inset 0 0 0 1px #fff"></div>
<div class="a" style="left:2709px;top:153px;width:22px;height:22px;background:#f3f4f6;border:1px solid #c8c8c8"></div>
<div class="a" style="left:2738px;top:108px;width:33px;height:33px;border:1px solid #b8b8b8;background:#fff"></div>
<div class="a" style="left:2741px;top:111px;width:27px;height:27px;background:linear-gradient(rgba(128,128,128,0),rgba(128,128,128,.9)),linear-gradient(90deg,#f00,#ff0,#0f0,#0ff,#00f,#f0f,#f00)"></div>
<div class="a pr" style="left:2730px;top:146px;width:48px;text-align:center;color:#333;line-height:15px">Edit<br>colors</div>
<div class="a pr" style="left:2570px;top:183px;color:#7a7d82">Colors</div>
<div class="a" style="left:2795px;top:108px;width:32px;height:33px;border:1px solid #c8c8c8;background:#fafafa"></div>
<svg class="a" style="left:2800px;top:112px" width="22" height="26"><defs><linearGradient id="p3d" x1="0" y1="0" x2="1" y2="1"><stop offset="0" stop-color="#4fc3f7"/><stop offset=".5" stop-color="#ab47bc"/><stop offset="1" stop-color="#ff9800"/></linearGradient></defs><path d="M11 24 C5 16 2 13 2 9 a9 9 0 0 1 18 0 c0 4 -3 7 -9 15z" fill="url(#p3d)"/></svg>
<div class="a pr" style="left:2780px;top:146px;width:62px;text-align:center;color:#333;line-height:15px">Edit with<br>Paint 3D</div>
<div class="a" style="left:2049px;top:199px;width:1662px;height:17px;background:#f3f4f6;border-top:1px solid #dadde2"></div>
<svg class="a" style="left:2049px;top:199px" width="1662" height="17" viewBox="2049 199 1662 17"><path d="M2067.6 199 v16" stroke="#9aa0a8" stroke-width="1"/><text x="2069.6" y="210" font-family="Liberation Sans" font-size="10.5" fill="#555">0</text><path d="M2076.3 211 v4" stroke="#9aa0a8" stroke-width="1"/><path d="M2085.0 212 v3" stroke="#9aa0a8" stroke-width="1"/><path d="M2093.7 211 v4" stroke="#9aa0a8" stroke-width="1"/><path d="M2102.4 212 v3" stroke="#9aa0a8" stroke-width="1"/><path d="M2111.1 211 v4" stroke="#9aa0a8" stroke-width="1"/><path d="M2119.8 212 v3" stroke="#9aa0a8" stroke-width="1"/><path d="M2128.5 211 v4" stroke="#9aa0a8" stroke-width="1"/><path d="M2137.1 212 v3" stroke="#9aa0a8" stroke-width="1"/><path d="M2145.8 211 v4" stroke="#9aa0a8" stroke-width="1"/><path d="M2154.5 199 v16" stroke="#9aa0a8" stroke-width="1"/><text x="2156.5" y="210" font-family="Liberation Sans" font-size="10.5" fill="#555">100</text><path d="M2163.2 211 v4" stroke="#9aa0a8" stroke-width="1"/><path d="M2171.9 212 v3" stroke="#9aa0a8" stroke-width="1"/><path d="M2180.6 211 v4" stroke="#9aa0a8" stroke-width="1"/><path d="M2189.3 212 v3" stroke="#9aa0a8" stroke-width="1"/><path d="M2198.0 211 v4" stroke="#9aa0a8" stroke-width="1"/><path d="M2206.7 212 v3" stroke="#9aa0a8" stroke-width="1"/><path d="M2215.4 211 v4" stroke="#9aa0a8" stroke-width="1"/><path d="M2224.1 212 v3" stroke="#9aa0a8" stroke-width="1"/><path d="M2232.8 211 v4" stroke="#9aa0a8" stroke-width="1"/><path d="M2241.5 199 v16" stroke="#9aa0a8" stroke-width="1"/><text x="2243.5" y="210" font-family="Liberation Sans" font-size="10.5" fill="#555">200</text><path d="M2250.2 211 v4" stroke="#9aa0a8" stroke-width="1"/><path d="M2258.8 212 v3" stroke="#9aa0a8" stroke-width="1"/><path d="M2267.5 211 v4" stroke="#9aa0a8" stroke-width="1"/><path d="M2276.2 212 v3" stroke="#9aa0a8" stroke-width="1"/><path d="M2284.9 211 v4" stroke="#9aa0a8" stroke-width="1"/><path d="M2293.6 212 v3" stroke="#9aa0a8" stroke-width="1"/><path d="M2302.3 211 v4" stroke="#9aa0a8" stroke-width="1"/><path d="M2311.0 212 v3" stroke="#9aa0a8" stroke-width="1"/><path d="M2319.7 211 v4" stroke="#9aa0a8" stroke-width="1"/><path d="M2328.4 199 v16" stroke="#9aa0a8" stroke-width="1"/><text x="2330.4" y="210" font-family="Liberation Sans" font-size="10.5" fill="#555">300</text><path d="M2337.1 211 v4" stroke="#9aa0a8" stroke-width="1"/><path d="M2345.8 212 v3" stroke="#9aa0a8" stroke-width="1"/><path d="M2354.5 211 v4" stroke="#9aa0a8" stroke-width="1"/><path d="M2363.2 212 v3" stroke="#9aa0a8" stroke-width="1"/><path d="M2371.9 211 v4" stroke="#9aa0a8" stroke-width="1"/><path d="M2380.5 212 v3" stroke="#9aa0a8" stroke-width="1"/><path d="M2389.2 211 v4" stroke="#9aa0a8" stroke-width="1"/><path d="M2397.9 212 v3" stroke="#9aa0a8" stroke-width="1"/><path d="M2406.6 211 v4" stroke="#9aa0a8" stroke-width="1"/><path d="M2415.3 199 v16" stroke="#9aa0a8" stroke-width="1"/><text x="2417.3" y="210" font-family="Liberation Sans" font-size="10.5" fill="#555">400</text><path d="M2424.0 211 v4" stroke="#9aa0a8" stroke-width="1"/><path d="M2432.7 212 v3" stroke="#9aa0a8" stroke-width="1"/><path d="M2441.4 211 v4" stroke="#9aa0a8" stroke-width="1"/><path d="M2450.1 212 v3" stroke="#9aa0a8" stroke-width="1"/><path d="M2458.8 211 v4" stroke="#9aa0a8" stroke-width="1"/><path d="M2467.5 212 v3" stroke="#9aa0a8" stroke-width="1"/><path d="M2476.2 211 v4" stroke="#9aa0a8" stroke-width="1"/><path d="M2484.9 212 v3" stroke="#9aa0a8" stroke-width="1"/><path d="M2493.6 211 v4" stroke="#9aa0a8" stroke-width="1"/><path d="M2502.2 199 v16" stroke="#9aa0a8" stroke-width="1"/><text x="2504.2" y="210" font-family="Liberation Sans" font-size="10.5" fill="#555">500</text><path d="M2510.9 211 v4" stroke="#9aa0a8" stroke-width="1"/><path d="M2519.6 212 v3" stroke="#9aa0a8" stroke-width="1"/><path d="M2528.3 211 v4" stroke="#9aa0a8" stroke-width="1"/><path d="M2537.0 212 v3" stroke="#9aa0a8" stroke-width="1"/><path d="M2545.7 211 v4" stroke="#9aa0a8" stroke-width="1"/><path d="M2554.4 212 v3" stroke="#9aa0a8" stroke-width="1"/><path d="M2563.1 211 v4" stroke="#9aa0a8" stroke-width="1"/><path d="M2571.8 212 v3" stroke="#9aa0a8" stroke-width="1"/><path d="M2580.5 211 v4" stroke="#9aa0a8" stroke-width="1"/><path d="M2589.2 199 v16" stroke="#9aa0a8" stroke-width="1"/><text x="2591.2" y="210" font-family="Liberation Sans" font-size="10.5" fill="#555">600</text><path d="M2597.9 211 v4" stroke="#9aa0a8" stroke-width="1"/><path d="M2606.6 212 v3" stroke="#9aa0a8" stroke-width="1"/><path d="M2615.3 211 v4" stroke="#9aa0a8" stroke-width="1"/><path d="M2624.0 212 v3" stroke="#9aa0a8" stroke-width="1"/><path d="M2632.6 211 v4" stroke="#9aa0a8" stroke-width="1"/><path d="M2641.3 212 v3" stroke="#9aa0a8" stroke-width="1"/><path d="M2650.0 211 v4" stroke="#9aa0a8" stroke-width="1"/><path d="M2658.7 212 v3" stroke="#9aa0a8" stroke-width="1"/><path d="M2667.4 211 v4" stroke="#9aa0a8" stroke-width="1"/><path d="M2676.1 199 v16" stroke="#9aa0a8" stroke-width="1"/><text x="2678.1" y="210" font-family="Liberation Sans" font-size="10.5" fill="#555">700</text><path d="M2684.8 211 v4" stroke="#9aa0a8" stroke-width="1"/><path d="M2693.5 212 v3" stroke="#9aa0a8" stroke-width="1"/><path d="M2702.2 211 v4" stroke="#9aa0a8" stroke-width="1"/><path d="M2710.9 212 v3" stroke="#9aa0a8" stroke-width="1"/><path d="M2719.6 211 v4" stroke="#9aa0a8" stroke-width="1"/><path d="M2728.3 212 v3" stroke="#9aa0a8" stroke-width="1"/><path d="M2737.0 211 v4" stroke="#9aa0a8" stroke-width="1"/><path d="M2745.7 212 v3" stroke="#9aa0a8" stroke-width="1"/><path d="M2754.3 211 v4" stroke="#9aa0a8" stroke-width="1"/><path d="M2763.0 199 v16" stroke="#9aa0a8" stroke-width="1"/><text x="2765.0" y="210" font-family="Liberation Sans" font-size="10.5" fill="#555">800</text><path d="M2771.7 211 v4" stroke="#9aa0a8" stroke-width="1"/><path d="M2780.4 212 v3" stroke="#9aa0a8" stroke-width="1"/><path d="M2789.1 211 v4" stroke="#9aa0a8" stroke-width="1"/><path d="M2797.8 212 v3" stroke="#9aa0a8" stroke-width="1"/><path d="M2806.5 211 v4" stroke="#9aa0a8" stroke-width="1"/><path d="M2815.2 212 v3" stroke="#9aa0a8" stroke-width="1"/><path d="M2823.9 211 v4" stroke="#9aa0a8" stroke-width="1"/><path d="M2832.6 212 v3" stroke="#9aa0a8" stroke-width="1"/><path d="M2841.3 211 v4" stroke="#9aa0a8" stroke-width="1"/><path d="M2850.0 199 v16" stroke="#9aa0a8" stroke-width="1"/><text x="2852.0" y="210" font-family="Liberation Sans" font-size="10.5" fill="#555">900</text><path d="M2858.7 211 v4" stroke="#9aa0a8" stroke-width="1"/><path d="M2867.4 212 v3" stroke="#9aa0a8" stroke-width="1"/><path d="M2876.0 211 v4" stroke="#9aa0a8" stroke-width="1"/><path d="M2884.7 212 v3" stroke="#9aa0a8" stroke-width="1"/><path d="M2893.4 211 v4" stroke="#9aa0a8" stroke-width="1"/><path d="M2902.1 212 v3" stroke="#9aa0a8" stroke-width="1"/><path d="M2910.8 211 v4" stroke="#9aa0a8" stroke-width="1"/><path d="M2919.5 212 v3" stroke="#9aa0a8" stroke-width="1"/><path d="M2928.2 211 v4" stroke="#9aa0a8" stroke-width="1"/><path d="M2936.9 199 v16" stroke="#9aa0a8" stroke-width="1"/><text x="2938.9" y="210" font-family="Liberation Sans" font-size="10.5" fill="#555">1000</text><path d="M2945.6 211 v4" stroke="#9aa0a8" stroke-width="1"/><path d="M2954.3 212 v3" stroke="#9aa0a8" stroke-width="1"/><path d="M2963.0 211 v4" stroke="#9aa0a8" stroke-width="1"/><path d="M2971.7 212 v3" stroke="#9aa0a8" stroke-width="1"/><path d="M2980.4 211 v4" stroke="#9aa0a8" stroke-width="1"/><path d="M2989.1 212 v3" stroke="#9aa0a8" stroke-width="1"/><path d="M2997.8 211 v4" stroke="#9aa0a8" stroke-width="1"/><path d="M3006.4 212 v3" stroke="#9aa0a8" stroke-width="1"/><path d="M3015.1 211 v4" stroke="#9aa0a8" stroke-width="1"/><path d="M3023.8 199 v16" stroke="#9aa0a8" stroke-width="1"/><text x="3025.8" y="210" font-family="Liberation Sans" font-size="10.5" fill="#555">1100</text><path d="M3032.5 211 v4" stroke="#9aa0a8" stroke-width="1"/><path d="M3041.2 212 v3" stroke="#9aa0a8" stroke-width="1"/><path d="M3049.9 211 v4" stroke="#9aa0a8" stroke-width="1"/><path d="M3058.6 212 v3" stroke="#9aa0a8" stroke-width="1"/><path d="M3067.3 211 v4" stroke="#9aa0a8" stroke-width="1"/><path d="M3076.0 212 v3" stroke="#9aa0a8" stroke-width="1"/><path d="M3084.7 211 v4" stroke="#9aa0a8" stroke-width="1"/><path d="M3093.4 212 v3" stroke="#9aa0a8" stroke-width="1"/><path d="M3102.1 211 v4" stroke="#9aa0a8" stroke-width="1"/><path d="M3110.8 199 v16" stroke="#9aa0a8" stroke-width="1"/><text x="3112.8" y="210" font-family="Liberation Sans" font-size="10.5" fill="#555">1200</text><path d="M3119.5 211 v4" stroke="#9aa0a8" stroke-width="1"/><path d="M3128.1 212 v3" stroke="#9aa0a8" stroke-width="1"/><path d="M3136.8 211 v4" stroke="#9aa0a8" stroke-width="1"/><path d="M3145.5 212 v3" stroke="#9aa0a8" stroke-width="1"/><path d="M3154.2 211 v4" stroke="#9aa0a8" stroke-width="1"/><path d="M3162.9 212 v3" stroke="#9aa0a8" stroke-width="1"/><path d="M3171.6 211 v4" stroke="#9aa0a8" stroke-width="1"/><path d="M3180.3 212 v3" stroke="#9aa0a8" stroke-width="1"/><path d="M3189.0 211 v4" stroke="#9aa0a8" stroke-width="1"/><path d="M3197.7 199 v16" stroke="#9aa0a8" stroke-width="1"/><text x="3199.7" y="210" font-family="Liberation Sans" font-size="10.5" fill="#555">1300</text><path d="M3206.4 211 v4" stroke="#9aa0a8" stroke-width="1"/><path d="M3215.1 212 v3" stroke="#9aa0a8" stroke-width="1"/><path d="M3223.8 211 v4" stroke="#9aa0a8" stroke-width="1"/><path d="M3232.5 212 v3" stroke="#9aa0a8" stroke-width="1"/><path d="M3241.2 211 v4" stroke="#9aa0a8" stroke-width="1"/><path d="M3249.8 212 v3" stroke="#9aa0a8" stroke-width="1"/><path d="M3258.5 211 v4" stroke="#9aa0a8" stroke-width="1"/><path d="M3267.2 212 v3" stroke="#9aa0a8" stroke-width="1"/><path d="M3275.9 211 v4" stroke="#9aa0a8" stroke-width="1"/><path d="M3284.6 199 v16" stroke="#9aa0a8" stroke-width="1"/><text x="3286.6" y="210" font-family="Liberation Sans" font-size="10.5" fill="#555">1400</text><path d="M3293.3 211 v4" stroke="#9aa0a8" stroke-width="1"/><path d="M3302.0 212 v3" stroke="#9aa0a8" stroke-width="1"/><path d="M3310.7 211 v4" stroke="#9aa0a8" stroke-width="1"/><path d="M3319.4 212 v3" stroke="#9aa0a8" stroke-width="1"/><path d="M3328.1 211 v4" stroke="#9aa0a8" stroke-width="1"/><path d="M3336.8 212 v3" stroke="#9aa0a8" stroke-width="1"/><path d="M3345.5 211 v4" stroke="#9aa0a8" stroke-width="1"/><path d="M3354.2 212 v3" stroke="#9aa0a8" stroke-width="1"/><path d="M3362.9 211 v4" stroke="#9aa0a8" stroke-width="1"/><path d="M3371.6 199 v16" stroke="#9aa0a8" stroke-width="1"/><text x="3373.6" y="210" font-family="Liberation Sans" font-size="10.5" fill="#555">1500</text><path d="M3380.2 211 v4" stroke="#9aa0a8" stroke-width="1"/><path d="M3388.9 212 v3" stroke="#9aa0a8" stroke-width="1"/><path d="M3397.6 211 v4" stroke="#9aa0a8" stroke-width="1"/><path d="M3406.3 212 v3" stroke="#9aa0a8" stroke-width="1"/><path d="M3415.0 211 v4" stroke="#9aa0a8" stroke-width="1"/><path d="M3423.7 212 v3" stroke="#9aa0a8" stroke-width="1"/><path d="M3432.4 211 v4" stroke="#9aa0a8" stroke-width="1"/><path d="M3441.1 212 v3" stroke="#9aa0a8" stroke-width="1"/><path d="M3449.8 211 v4" stroke="#9aa0a8" stroke-width="1"/><path d="M3458.5 199 v16" stroke="#9aa0a8" stroke-width="1"/><text x="3460.5" y="210" font-family="Liberation Sans" font-size="10.5" fill="#555">1600</text><path d="M3467.2 211 v4" stroke="#9aa0a8" stroke-width="1"/><path d="M3475.9 212 v3" stroke="#9aa0a8" stroke-width="1"/><path d="M3484.6 211 v4" stroke="#9aa0a8" stroke-width="1"/><path d="M3493.3 212 v3" stroke="#9aa0a8" stroke-width="1"/><path d="M3501.9 211 v4" stroke="#9aa0a8" stroke-width="1"/><path d="M3510.6 212 v3" stroke="#9aa0a8" stroke-width="1"/><path d="M3519.3 211 v4" stroke="#9aa0a8" stroke-width="1"/><path d="M3528.0 212 v3" stroke="#9aa0a8" stroke-width="1"/><path d="M3536.7 211 v4" stroke="#9aa0a8" stroke-width="1"/><path d="M3545.4 199 v16" stroke="#9aa0a8" stroke-width="1"/><text x="3547.4" y="210" font-family="Liberation Sans" font-size="10.5" fill="#555">1700</text><path d="M3554.1 211 v4" stroke="#9aa0a8" stroke-width="1"/><path d="M3562.8 212 v3" stroke="#9aa0a8" stroke-width="1"/><path d="M3571.5 211 v4" stroke="#9aa0a8" stroke-width="1"/><path d="M3580.2 212 v3" stroke="#9aa0a8" stroke-width="1"/><path d="M3588.9 211 v4" stroke="#9aa0a8" stroke-width="1"/><path d="M3597.6 212 v3" stroke="#9aa0a8" stroke-width="1"/><path d="M3606.3 211 v4" stroke="#9aa0a8" stroke-width="1"/><path d="M3615.0 212 v3" stroke="#9aa0a8" stroke-width="1"/><path d="M3623.6 211 v4" stroke="#9aa0a8" stroke-width="1"/><path d="M3632.3 199 v16" stroke="#9aa0a8" stroke-width="1"/><text x="3634.3" y="210" font-family="Liberation Sans" font-size="10.5" fill="#555">1800</text><path d="M3641.0 211 v4" stroke="#9aa0a8" stroke-width="1"/><path d="M3649.7 212 v3" stroke="#9aa0a8" stroke-width="1"/><path d="M3658.4 211 v4" stroke="#9aa0a8" stroke-width="1"/><path d="M3667.1 212 v3" stroke="#9aa0a8" stroke-width="1"/><path d="M3675.8 211 v4" stroke="#9aa0a8" stroke-width="1"/><path d="M3684.5 212 v3" stroke="#9aa0a8" stroke-width="1"/><path d="M3693.2 211 v4" stroke="#9aa0a8" stroke-width="1"/><path d="M3701.9 212 v3" stroke="#9aa0a8" stroke-width="1"/><path d="M3710.6 211 v4" stroke="#9aa0a8" stroke-width="1"/><path d="M2681 199 v17" stroke="#c0392b" stroke-width="1.3"/></svg>
<div class="a" style="left:2049px;top:215px;width:1662px;height:730px;background:#d9e1ef"></div>
<div class="a" style="left:2049px;top:215px;width:13px;height:730px;background:#f3f4f6;border-right:1px solid #c7ccd4"></div>
<svg class="a" style="left:2049px;top:215px" width="14" height="730" viewBox="2049 215 14 730"><path d="M2049 220.5 h13" stroke="#9aa0a8" stroke-width="1"/><text transform="translate(2058 222.5) rotate(-90)" text-anchor="end" font-family="Liberation Sans" font-size="10.5" fill="#555">0</text><path d="M2058 229.2 h4" stroke="#9aa0a8" stroke-width="1"/><path d="M2058 237.9 h4" stroke="#9aa0a8" stroke-width="1"/><path d="M2058 246.6 h4" stroke="#9aa0a8" stroke-width="1"/><path d="M2058 255.3 h4" stroke="#9aa0a8" stroke-width="1"/><path d="M2058 264.0 h4" stroke="#9aa0a8" stroke-width="1"/><path d="M2058 272.7 h4" stroke="#9aa0a8" stroke-width="1"/><path d="M2058 281.4 h4" stroke="#9aa0a8" stroke-width="1"/><path d="M2058 290.0 h4" stroke="#9aa0a8" stroke-width="1"/><path d="M2058 298.7 h4" stroke="#9aa0a8" stroke-width="1"/><path d="M2049 307.4 h13" stroke="#9aa0a8" stroke-width="1"/><text transform="translate(2058 309.4) rotate(-90)" text-anchor="end" font-family="Liberation Sans" font-size="10.5" fill="#555">100</text><path d="M2058 316.1 h4" stroke="#9aa0a8" stroke-width="1"/><path d="M2058 324.8 h4" stroke="#9aa0a8" stroke-width="1"/><path d="M2058 333.5 h4" stroke="#9aa0a8" stroke-width="1"/><path d="M2058 342.2 h4" stroke="#9aa0a8" stroke-width="1"/><path d="M2058 350.9 h4" stroke="#9aa0a8" stroke-width="1"/><path d="M2058 359.6 h4" stroke="#9aa0a8" stroke-width="1"/><path d="M2058 368.3 h4" stroke="#9aa0a8" stroke-width="1"/><path d="M2058 377.0 h4" stroke="#9aa0a8" stroke-width="1"/><path d="M2058 385.7 h4" stroke="#9aa0a8" stroke-width="1"/><path d="M2049 394.4 h13" stroke="#9aa0a8" stroke-width="1"/><text transform="translate(2058 396.4) rotate(-90)" text-anchor="end" font-family="Liberation Sans" font-size="10.5" fill="#555">200</text><path d="M2058 403.1 h4" stroke="#9aa0a8" stroke-width="1"/><path d="M2058 411.7 h4" stroke="#9aa0a8" stroke-width="1"/><path d="M2058 420.4 h4" stroke="#9aa0a8" stroke-width="1"/><path d="M2058 429.1 h4" stroke="#9aa0a8" stroke-width="1"/><path d="M2058 437.8 h4" stroke="#9aa0a8" stroke-width="1"/><path d="M2058 446.5 h4" stroke="#9aa0a8" stroke-width="1"/><path d="M2058 455.2 h4" stroke="#9aa0a8" stroke-width="1"/><path d="M2058 463.9 h4" stroke="#9aa0a8" stroke-width="1"/><path d="M2058 472.6 h4" stroke="#9aa0a8" stroke-width="1"/><path d="M2049 481.3 h13" stroke="#9aa0a8" stroke-width="1"/><text transform="translate(2058 483.3) rotate(-90)" text-anchor="end" font-family="Liberation Sans" font-size="10.5" fill="#555">300</text><path d="M2058 490.0 h4" stroke="#9aa0a8" stroke-width="1"/><path d="M2058 498.7 h4" stroke="#9aa0a8" stroke-width="1"/><path d="M2058 507.4 h4" stroke="#9aa0a8" stroke-width="1"/><path d="M2058 516.1 h4" stroke="#9aa0a8" stroke-width="1"/><path d="M2058 524.8 h4" stroke="#9aa0a8" stroke-width="1"/><path d="M2058 533.4 h4" stroke="#9aa0a8" stroke-width="1"/><path d="M2058 542.1 h4" stroke="#9aa0a8" stroke-width="1"/><path d="M2058 550.8 h4" stroke="#9aa0a8" stroke-width="1"/><path d="M2058 559.5 h4" stroke="#9aa0a8" stroke-width="1"/><path d="M2049 568.2 h13" stroke="#9aa0a8" stroke-width="1"/><text transform="translate(2058 570.2) rotate(-90)" text-anchor="end" font-family="Liberation Sans" font-size="10.5" fill="#555">400</text><path d="M2058 576.9 h4" stroke="#9aa0a8" stroke-width="1"/><path d="M2058 585.6 h4" stroke="#9aa0a8" stroke-width="1"/><path d="M2058 594.3 h4" stroke="#9aa0a8" stroke-width="1"/><path d="M2058 603.0 h4" stroke="#9aa0a8" stroke-width="1"/><path d="M2058 611.7 h4" stroke="#9aa0a8" stroke-width="1"/><path d="M2058 620.4 h4" stroke="#9aa0a8" stroke-width="1"/><path d="M2058 629.1 h4" stroke="#9aa0a8" stroke-width="1"/><path d="M2058 637.8 h4" stroke="#9aa0a8" stroke-width="1"/><path d="M2058 646.5 h4" stroke="#9aa0a8" stroke-width="1"/><path d="M2049 655.1 h13" stroke="#9aa0a8" stroke-width="1"/><text transform="translate(2058 657.1) rotate(-90)" text-anchor="end" font-family="Liberation Sans" font-size="10.5" fill="#555">500</text><path d="M2058 663.8 h4" stroke="#9aa0a8" stroke-width="1"/><path d="M2058 672.5 h4" stroke="#9aa0a8" stroke-width="1"/><path d="M2058 681.2 h4" stroke="#9aa0a8" stroke-width="1"/><path d="M2058 689.9 h4" stroke="#9aa0a8" stroke-width="1"/><path d="M2058 698.6 h4" stroke="#9aa0a8" stroke-width="1"/><path d="M2058 707.3 h4" stroke="#9aa0a8" stroke-width="1"/><path d="M2058 716.0 h4" stroke="#9aa0a8" stroke-width="1"/><path d="M2058 724.7 h4" stroke="#9aa0a8" stroke-width="1"/><path d="M2058 733.4 h4" stroke="#9aa0a8" stroke-width="1"/><path d="M2049 742.1 h13" stroke="#9aa0a8" stroke-width="1"/><text transform="translate(2058 744.1) rotate(-90)" text-anchor="end" font-family="Liberation Sans" font-size="10.5" fill="#555">600</text><path d="M2058 750.8 h4" stroke="#9aa0a8" stroke-width="1"/><path d="M2058 759.5 h4" stroke="#9aa0a8" stroke-width="1"/><path d="M2058 768.2 h4" stroke="#9aa0a8" stroke-width="1"/><path d="M2058 776.9 h4" stroke="#9aa0a8" stroke-width="1"/><path d="M2058 785.5 h4" stroke="#9aa0a8" stroke-width="1"/><path d="M2058 794.2 h4" stroke="#9aa0a8" stroke-width="1"/><path d="M2058 802.9 h4" stroke="#9aa0a8" stroke-width="1"/><path d="M2058 811.6 h4" stroke="#9aa0a8" stroke-width="1"/><path d="M2058 820.3 h4" stroke="#9aa0a8" stroke-width="1"/><path d="M2049 829.0 h13" stroke="#9aa0a8" stroke-width="1"/><text transform="translate(2058 831.0) rotate(-90)" text-anchor="end" font-family="Liberation Sans" font-size="10.5" fill="#555">700</text><path d="M2058 837.7 h4" stroke="#9aa0a8" stroke-width="1"/><path d="M2058 846.4 h4" stroke="#9aa0a8" stroke-width="1"/><path d="M2058 855.1 h4" stroke="#9aa0a8" stroke-width="1"/><path d="M2058 863.8 h4" stroke="#9aa0a8" stroke-width="1"/><path d="M2058 872.5 h4" stroke="#9aa0a8" stroke-width="1"/><path d="M2058 881.2 h4" stroke="#9aa0a8" stroke-width="1"/><path d="M2058 889.9 h4" stroke="#9aa0a8" stroke-width="1"/><path d="M2058 898.6 h4" stroke="#9aa0a8" stroke-width="1"/><path d="M2058 907.2 h4" stroke="#9aa0a8" stroke-width="1"/><path d="M2049 915.9 h13" stroke="#9aa0a8" stroke-width="1"/><text transform="translate(2058 917.9) rotate(-90)" text-anchor="end" font-family="Liberation Sans" font-size="10.5" fill="#555">800</text><path d="M2058 924.6 h4" stroke="#9aa0a8" stroke-width="1"/><path d="M2058 933.3 h4" stroke="#9aa0a8" stroke-width="1"/><path d="M2058 942.0 h4" stroke="#9aa0a8" stroke-width="1"/><path d="M2049 694 h13" stroke="#c0392b" stroke-width="1.3"/></svg>
<div class="a" style="left:2067px;top:220px;width:1583px;height:691px;background:#fff;box-shadow:4px 4px 4px rgba(120,135,160,.35)"></div>
<svg class="a" style="left:2067px;top:220px" width="1590" height="697" viewBox="2067 220 1590 697">
<g fill="none" stroke="#000" stroke-width="4.2">
<rect x="2331.7" y="419.8" width="47.7" height="65.6"/>
<rect x="2250.4" y="574" width="71.4" height="56.2"/>
<rect x="2255.4" y="694" width="83.8" height="93"/>
<path d="M2386 445 L2472 511"/>
<path d="M2474 457 L2469 597"/>
<path d="M2473 522 L2531 521.6"/>
<path d="M2334.6 606 L2472.7 527"/>
<path d="M2360.5 750 L2470.8 551"/>
<ellipse cx="2582.6" cy="519.3" rx="47.6" ry="39"/>
<path d="M2644 485 L3040 478"/>
<path d="M2641 507 L3043 501"/>
<ellipse cx="3097.4" cy="526.5" rx="57.4" ry="40.4"/>
</g>
<g font-family="Liberation Sans" font-weight="bold" font-size="13" fill="#000">
<text x="2317" y="368" textLength="75">192.168.1.5</text>
<text x="2435" y="368" textLength="51">10.0.0.1</text>
<text x="2190" y="424" textLength="97">192.168.1.0/24</text>
<text x="2488" y="504">.1</text>
<text x="2232" y="540.5" textLength="34">nivas</text>
<text x="2505.6" y="696" textLength="26.4">ACL</text>
<text x="2559" y="696" textLength="29">NAT</text>
<text x="2612" y="696" textLength="37">RUTA</text>
<text x="2636" y="473" textLength="36">200...</text>
<text x="3034" y="469" textLength="40">195....</text>
<text x="2811.5" y="535" textLength="51.5">internet</text>
<text x="3279.5" y="456.5" textLength="50.5">10.0.0.1</text>
<text x="3334" y="536" textLength="14">ht</text>
<text x="2680" y="698" textLength="32">ipsec</text>
</g>
<rect x="2677.5" y="681.5" width="161" height="23" fill="none" stroke="#5b8fd0" stroke-width="1" stroke-dasharray="3 2"/>
<g fill="#fff" stroke="#555" stroke-width="0.8">
<rect x="2675.5" y="679.5" width="4" height="4"/><rect x="2756" y="679.5" width="4" height="4"/><rect x="2836.5" y="679.5" width="4" height="4"/>
<rect x="2675.5" y="690.5" width="4" height="4"/><rect x="2836.5" y="690.5" width="4" height="4"/>
<rect x="2675.5" y="702.5" width="4" height="4"/><rect x="2756" y="702.5" width="4" height="4"/><rect x="2836.5" y="702.5" width="4" height="4"/>
<rect x="3650" y="564.5" width="4" height="4"/><rect x="3650" y="909" width="4" height="4"/><rect x="2857" y="909" width="4" height="4"/>
</g>
<path d="M2712.5 686 v14" stroke="#000" stroke-width="1"/>
</svg>

<svg class="a" style="left:2049px;top:945px" width="1662" height="40" viewBox="2049 945 1662 40">
<rect x="2049" y="945" width="1662" height="40" fill="#1c1c1c"/>
<rect x="3241" y="945" width="44" height="40" fill="#333333"/><rect x="3421" y="945" width="45" height="40" fill="#3a3a3a"/>
<path d="M2063 960 l7.5 -1.2 v6.7 h-7.5z M2071.5 958.7 l9.5 -1.5 v8.3 h-9.5z M2063 966.5 h7.5 v6.8 l-7.5 -1.1z M2071.5 966.5 h9.5 v8.4 l-9.5 -1.4z" fill="#fff"/>
<circle cx="2127" cy="963" r="5.5" fill="none" stroke="#fff" stroke-width="1.3"/><path d="M2123 967 l-7 8" stroke="#fff" stroke-width="1.5"/>
<path d="M2165 956 h20 l3 3 v19 l-22 -1z" fill="#e9eef8"/><path d="M2165 956 q-3 10 0 21" stroke="#3a6cc8" stroke-width="2" fill="none"/><rect x="2173" y="960" width="5" height="5" fill="#3a5cb0"/><path d="M2182 970 l3 -3 l3 3 l-3 3z" fill="#1a3a9a"/><rect x="2173" y="968" width="2" height="2" fill="#3a5cb0"/><rect x="2177" y="970" width="2" height="2" fill="#3a5cb0"/>
<rect x="2216" y="955" width="19" height="24" rx="1" fill="#b55fd6"/><rect x="2227" y="955" width="8" height="24" fill="#9a3cc0"/><rect x="2209" y="959" width="14" height="14" rx="1" fill="#7719aa"/><text x="2216" y="970.5" font-family="Liberation Sans" font-weight="bold" font-size="10" fill="#fff" text-anchor="middle">N</text>
<rect x="2256" y="955" width="23" height="18" fill="#c9d7ea" stroke="#9aa" stroke-width="1"/><rect x="2262" y="965" width="19" height="14" fill="#3a1010" stroke="#888" stroke-width="1"/><path d="M2268 968 l6 4 l-6 4z" fill="#d02020"/>
<path d="M2302 957 h17 l5 5 v17 h-22z" fill="#6cb33e"/><circle cx="2311" cy="966" r="4" fill="#a8d86a"/><path d="M2318 972 l8 -15" stroke="#d9a520" stroke-width="1.5"/>
<path d="M2351 957 h11 l3 2 h2 v19 h-16z" fill="#f2c55c"/><path d="M2351 961 h16 v15 l-16 2z" fill="#f8d775"/><path d="M2351 961 v18 l3 -2 v-16z" fill="#d9a73a"/>
<path d="M2396 957 h11 l3 2 h2 v19 h-16z" fill="#f2c55c"/><path d="M2396 961 h16 v15 l-16 2z" fill="#f8d775"/><path d="M2396 961 v18 l3 -2 v-16z" fill="#d9a73a"/>
<path d="M2441 957 h11 l3 2 h2 v19 h-16z" fill="#f2c55c"/><path d="M2441 961 h16 v15 l-16 2z" fill="#f8d775"/><path d="M2441 961 v18 l3 -2 v-16z" fill="#d9a73a"/>
<path d="M2486 957 h11 l3 2 h2 v19 h-16z" fill="#f2c55c"/><path d="M2486 961 h16 v15 l-16 2z" fill="#f8d775"/><path d="M2486 961 v18 l3 -2 v-16z" fill="#d9a73a"/>
<circle cx="2542" cy="966" r="12" fill="#db4437"/><path d="M2542 966 L2531.6 972 A12 12 0 0 0 2548 976.4z" fill="#0f9d58"/><path d="M2542 966 L2548 976.4 A12 12 0 0 0 2552.4 960 L2542 960z" fill="#f4b400"/><circle cx="2542" cy="966" r="5.5" fill="#fff"/><circle cx="2542" cy="966" r="4.3" fill="#4285f4"/>
<circle cx="2588" cy="967" r="11" fill="#ff7139"/><circle cx="2589" cy="967" r="6" fill="#5b3cc4"/><path d="M2580 958 q8 -6 14 2" stroke="#ffbd4f" stroke-width="3" fill="none"/>
<text x="2631" y="977" font-family="Liberation Sans" font-weight="bold" font-size="26" fill="#2fa4e7" text-anchor="middle">e</text><ellipse cx="2631" cy="965" rx="13" ry="6" fill="none" stroke="#f5c518" stroke-width="1.5" transform="rotate(-20 2631 965)"/>
<rect x="2670" y="954" width="17" height="25" fill="#0a64c8"/><rect x="2676" y="957" width="14" height="19" fill="#28a8ea"/><rect x="2662" y="960" width="13" height="13" fill="#0f4ea8"/><text x="2668.5" y="970.5" font-family="Liberation Sans" font-weight="bold" font-size="9" fill="#fff" text-anchor="middle">o</text>
<path d="M2707 958 h9 l2 2 h12 v16 h-23z" fill="#e8b432"/><path d="M2707 962 h23 v14 h-23z" fill="#f5c94a"/>
<rect x="2760.0" y="954" width="17" height="24" rx="1" fill="#21a366"/><rect x="2768.0" y="954" width="9" height="24" fill="#33c481"/><rect x="2760.0" y="966" width="17" height="12" fill="#107c41"/><rect x="2752.0" y="959" width="13" height="13" rx="1" fill="#185c37"/><text x="2758.5" y="969.5" font-family="Liberation Sans" font-weight="bold" font-size="9" fill="#fff" text-anchor="middle">X</text>
<rect x="2805.1" y="954" width="17" height="24" rx="1" fill="#21a366"/><rect x="2813.1" y="954" width="9" height="24" fill="#33c481"/><rect x="2805.1" y="966" width="17" height="12" fill="#107c41"/><rect x="2797.1" y="959" width="13" height="13" rx="1" fill="#185c37"/><text x="2803.6" y="969.5" font-family="Liberation Sans" font-weight="bold" font-size="9" fill="#fff" text-anchor="middle">X</text>
<rect x="2850.2" y="954" width="17" height="24" rx="1" fill="#21a366"/><rect x="2858.2" y="954" width="9" height="24" fill="#33c481"/><rect x="2850.2" y="966" width="17" height="12" fill="#107c41"/><rect x="2842.2" y="959" width="13" height="13" rx="1" fill="#185c37"/><text x="2848.7" y="969.5" font-family="Liberation Sans" font-weight="bold" font-size="9" fill="#fff" text-anchor="middle">X</text>
<rect x="2895.3" y="954" width="17" height="24" rx="1" fill="#21a366"/><rect x="2903.3" y="954" width="9" height="24" fill="#33c481"/><rect x="2895.3" y="966" width="17" height="12" fill="#107c41"/><rect x="2887.3" y="959" width="13" height="13" rx="1" fill="#185c37"/><text x="2893.8" y="969.5" font-family="Liberation Sans" font-weight="bold" font-size="9" fill="#fff" text-anchor="middle">X</text>
<rect x="2940.4" y="954" width="17" height="24" rx="1" fill="#21a366"/><rect x="2948.4" y="954" width="9" height="24" fill="#33c481"/><rect x="2940.4" y="966" width="17" height="12" fill="#107c41"/><rect x="2932.4" y="959" width="13" height="13" rx="1" fill="#185c37"/><text x="2938.9" y="969.5" font-family="Liberation Sans" font-weight="bold" font-size="9" fill="#fff" text-anchor="middle">X</text>
<rect x="2985.5" y="954" width="17" height="24" rx="1" fill="#21a366"/><rect x="2993.5" y="954" width="9" height="24" fill="#33c481"/><rect x="2985.5" y="966" width="17" height="12" fill="#107c41"/><rect x="2977.5" y="959" width="13" height="13" rx="1" fill="#185c37"/><text x="2984.0" y="969.5" font-family="Liberation Sans" font-weight="bold" font-size="9" fill="#fff" text-anchor="middle">X</text>
<rect x="3030.6" y="954" width="17" height="24" rx="1" fill="#21a366"/><rect x="3038.6" y="954" width="9" height="24" fill="#33c481"/><rect x="3030.6" y="966" width="17" height="12" fill="#107c41"/><rect x="3022.6" y="959" width="13" height="13" rx="1" fill="#185c37"/><text x="3029.1" y="969.5" font-family="Liberation Sans" font-weight="bold" font-size="9" fill="#fff" text-anchor="middle">X</text>
<rect x="3075.7" y="954" width="17" height="24" rx="1" fill="#21a366"/><rect x="3083.7" y="954" width="9" height="24" fill="#33c481"/><rect x="3075.7" y="966" width="17" height="12" fill="#107c41"/><rect x="3067.7" y="959" width="13" height="13" rx="1" fill="#185c37"/><text x="3074.2" y="969.5" font-family="Liberation Sans" font-weight="bold" font-size="9" fill="#fff" text-anchor="middle">X</text>
<rect x="3120.8" y="954" width="17" height="24" rx="1" fill="#21a366"/><rect x="3128.8" y="954" width="9" height="24" fill="#33c481"/><rect x="3120.8" y="966" width="17" height="12" fill="#107c41"/><rect x="3112.8" y="959" width="13" height="13" rx="1" fill="#185c37"/><text x="3119.3" y="969.5" font-family="Liberation Sans" font-weight="bold" font-size="9" fill="#fff" text-anchor="middle">X</text>
<circle cx="3172" cy="966" r="11" fill="#d8e2f0" stroke="#4a5a80" stroke-width="1.5"/><rect x="3167" y="965" width="10" height="8" fill="#2a3a60"/><path d="M3169 965 v-3 a3 3 0 0 1 6 0 v3" stroke="#2a3a60" stroke-width="1.5" fill="none"/>
<circle cx="3224" cy="958" r="4" fill="#7b83eb"/><rect x="3217" y="962" width="14" height="14" rx="5" fill="#5059c9"/><circle cx="3230" cy="960" r="3" fill="#7b83eb"/><rect x="3207" y="959" width="13" height="13" rx="1" fill="#4b53bc"/><text x="3213.5" y="969.5" font-family="Liberation Sans" font-weight="bold" font-size="9" fill="#fff" text-anchor="middle">T</text>
<circle cx="3268" cy="958" r="4" fill="#7b83eb"/><rect x="3261" y="962" width="14" height="14" rx="5" fill="#5059c9"/><circle cx="3274" cy="960" r="3" fill="#7b83eb"/><rect x="3251" y="959" width="13" height="13" rx="1" fill="#4b53bc"/><text x="3257.5" y="969.5" font-family="Liberation Sans" font-weight="bold" font-size="9" fill="#fff" text-anchor="middle">T</text>
<circle cx="3313" cy="958" r="4" fill="#7b83eb"/><rect x="3306" y="962" width="14" height="14" rx="5" fill="#5059c9"/><circle cx="3319" cy="960" r="3" fill="#7b83eb"/><rect x="3296" y="959" width="13" height="13" rx="1" fill="#4b53bc"/><text x="3302.5" y="969.5" font-family="Liberation Sans" font-weight="bold" font-size="9" fill="#fff" text-anchor="middle">T</text>
<circle cx="3225" cy="975" r="5.5" fill="#d92c3a"/><text x="3225" y="978.5" font-family="Liberation Sans" font-weight="bold" font-size="8" fill="#fff" text-anchor="middle">1</text>
<path d="M3343 954 h14 l5 5 v20 h-19z" fill="#fff" stroke="#d4222a" stroke-width="1.2"/><path d="M3347 968 q5 -10 7 -1 q2 5 -8 4" stroke="#d4222a" stroke-width="1.3" fill="none"/>
<path d="M3388 974 l4 -17 h14 l-3 20z" fill="#7fb8e6"/><path d="M3392 957 h14" stroke="#c9e4f6" stroke-width="2"/>
<ellipse cx="3442" cy="967" rx="11" ry="9" fill="#c8dcf0"/><circle cx="3437" cy="963" r="1.8" fill="#e33"/><circle cx="3442" cy="961" r="1.8" fill="#3a3"/><circle cx="3436" cy="969" r="1.8" fill="#33e"/><path d="M3446 972 l7 -17" stroke="#d9a520" stroke-width="2"/>
<path d="M3476 969 l6 -6 l6 6" stroke="#fff" stroke-width="1.2" fill="none"/>
<path d="M3500 970 a4 4 0 0 1 2 -7 a6 6 0 0 1 11 1 a3.5 3.5 0 0 1 2 6z" fill="#1e90e0"/><circle cx="3511" cy="969" r="4.5" fill="#2aa0f0" stroke="#fff" stroke-width="1"/>
<rect x="3529" y="958" width="16" height="11" fill="none" stroke="#fff" stroke-width="1.1"/><path d="M3537 969 v4 M3533 973 h8" stroke="#fff" stroke-width="1.1"/><rect x="3526" y="955" width="4" height="5" fill="none" stroke="#fff" stroke-width="1"/>
</svg>
<div class="a" style="left:3555px;top:960px;font-size:11.5px;line-height:16px;color:#fff;white-space:nowrap">HRV</div>
<div class="a" style="left:3590px;top:950px;width:64px;text-align:center;font-size:11.5px;line-height:18px;color:#fff;white-space:nowrap">10:58<br>14.3.2023.</div>
<svg class="a" style="left:3668px;top:956px" width="20" height="20"><path d="M1.5 1.5 h16 v13 h-2 l-2 3 v-3 h-12z" fill="none" stroke="#fff" stroke-width="1.2"/></svg>
<div class="a" style="left:2602px;top:901px;width:486px;height:52px;border-radius:5px;background:#3d3d3d;overflow:hidden;box-shadow:0 2px 6px rgba(0,0,0,.3)">
 <div class="a" style="left:69px;top:0;width:1px;height:52px;background:#1f1f1f"></div>
 <div class="a" style="left:70px;top:0;width:208px;height:52px;background:#454545"></div>
 <div class="a" style="left:278px;top:0;width:156px;height:52px;background:#3b3b3b"></div>
 <div class="a" style="left:434px;top:0;width:52px;height:52px;background:#a4283c"></div>
 <div class="a" style="left:0;top:16px;width:69px;text-align:center;font-size:14.5px;line-height:20px;color:#b8b8b8">26:07</div>
</div>
<svg class="a" style="left:2602px;top:901px" width="486" height="52" viewBox="2602 901 486 52">
<g fill="none" stroke="#fff" stroke-width="1.5">
<rect x="2688" y="920" width="14" height="13" rx="2" fill="#fff"/><path d="M2702 925 l6 -3 v9 l-6 -3z" fill="#fff"/><path d="M2687 917 l20 20" stroke="#3d3d3d" stroke-width="3"/><path d="M2687 917 l20 20"/>
<rect x="2747" y="917" width="6" height="12" rx="3" fill="#fff"/><path d="M2744 925 a6 6 0 0 0 12 0 M2750 931 v5"/>
<rect x="2792" y="919" width="20" height="15" rx="2"/><path d="M2802 930 v-8 M2798.5 925 l3.5 -3.5 l3.5 3.5"/>
</g>
<g fill="#fff"><circle cx="2847" cy="927" r="1.8"/><circle cx="2854" cy="927" r="1.8"/><circle cx="2861" cy="927" r="1.8"/></g>
<g fill="none" stroke="#fff" stroke-width="1.3">
<path d="M2901 937 q-4 -4 -4 -10 v-6 a1.5 1.5 0 0 1 3 0 v4 v-7 a1.5 1.5 0 0 1 3 0 v6 v-7 a1.5 1.5 0 0 1 3 0 v7 v-5 a1.5 1.5 0 0 1 3 0 v9 l3 -3 a1.5 1.5 0 0 1 2 2 l-5 8 q-2 3 -8 2z"/>
<circle cx="2957" cy="927" r="10"/><path d="M2953 925 h8 M2953 929 h5"/>
<circle cx="3006" cy="921" r="4"/><path d="M2999 936 v-5 a3 3 0 0 1 3 -3 h8 a3 3 0 0 1 3 3 v5z"/><circle cx="3016" cy="922" r="2.5"/><path d="M3015 928 h3 a2 2 0 0 1 2 2 v3 h-4"/>
</g>
<path d="M3052 929 q10 -8 20 0 l-2 3 l-4 -1.5 v-2 q-4 -1.5 -8 0 v2 l-4 1.5z" fill="#fff"/>
</svg>
<!-- status bar -->
<div class="a" style="left:1920px;top:1036px;width:1920px;height:44px;background:#232428"></div>
<svg class="a" style="left:1920px;top:1036px" width="1920" height="44" viewBox="1920 1036 1920 44">
<rect x="1927.5" y="1043.5" width="29" height="29" rx="3" fill="none" stroke="#4a4b4f"/>
<rect x="1934" y="1052" width="9" height="11" fill="#fff"/><rect x="1944" y="1052" width="6" height="11" fill="none" stroke="#fff" stroke-width="1.2"/><path d="M1945 1055 l3 2.5 l-3 2.5z" fill="#fff"/>
<rect x="1959.5" y="1043.5" width="122" height="29" rx="3" fill="none" stroke="#4a4b4f"/>
<rect x="3561.5" y="1043.5" width="35" height="29" rx="3" fill="none" stroke="#4a4b4f"/>
<rect x="3606" y="1052" width="13" height="12" rx="1" fill="#fff"/><rect x="3609" y="1057" width="7" height="2" fill="#232428"/>
<rect x="3628" y="1055" width="90" height="5" rx="2.5" fill="#3a3b3f"/><rect x="3628" y="1055" width="20" height="5" rx="2.5" fill="#2a4a6a"/>
<circle cx="3650" cy="1057.5" r="8.5" fill="#36373b" stroke="#6b6c70"/>
<rect x="3728" y="1052" width="12" height="12" rx="1" fill="#fff"/><rect x="3730.5" y="1057" width="7" height="2" fill="#232428"/><rect x="3733" y="1054.5" width="2" height="7" fill="#232428"/>
<rect x="3750.5" y="1043.5" width="82" height="29" rx="3" fill="none" stroke="#4a4b4f"/>
<path d="M3818 1055 l5 5 l5 -5" stroke="#fff" stroke-width="1.2" fill="none"/>
</svg>
<div class="a" style="left:1968px;top:1049px;font-size:13.3px;line-height:18px;color:#f0f0f0;white-space:nowrap">Show Thumbnails</div>
<div class="a" style="left:2807px;top:1049px;font-size:13.3px;line-height:18px;color:#f0f0f0;white-space:nowrap">1 of 1</div>
<div class="a" style="left:3570px;top:1049px;font-size:14px;line-height:18px;color:#f0f0f0;white-space:nowrap">Fit</div>
<div class="a" style="left:3757px;top:1049px;font-size:14px;line-height:18px;color:#f0f0f0;white-space:nowrap">100%</div>

</body></html>
